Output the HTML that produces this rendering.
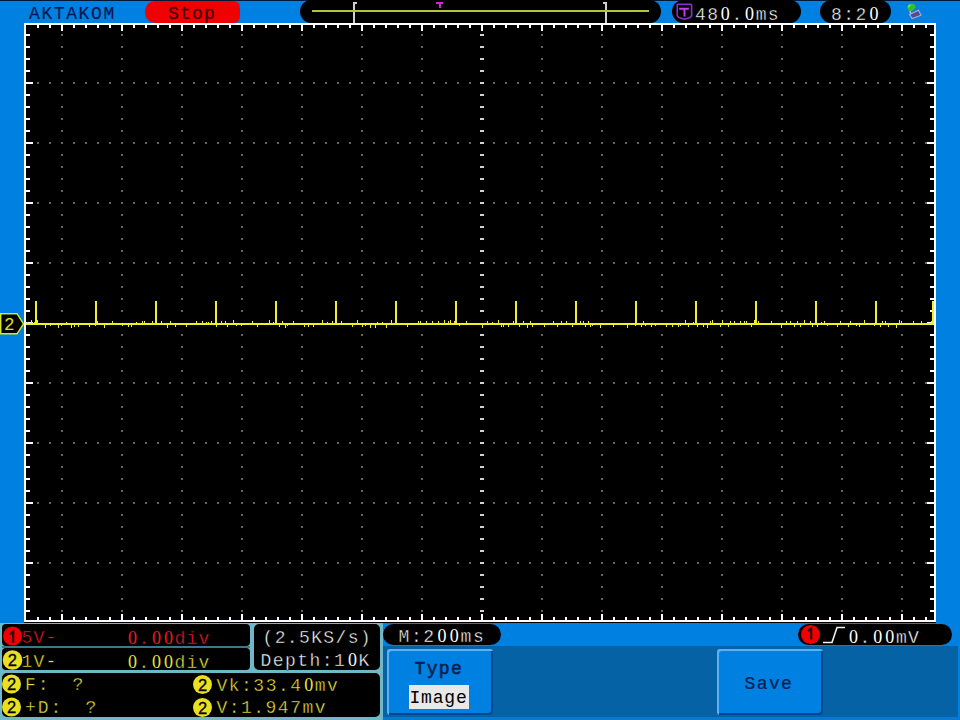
<!DOCTYPE html>
<html><head><meta charset="utf-8"><style>
html,body{margin:0;padding:0;}
body{width:960px;height:720px;overflow:hidden;position:relative;background:#0080e0;font-family:"Liberation Mono",monospace;}
.t{position:absolute;white-space:pre;}
.a{position:absolute;}
.z{display:inline-block;text-align:center;letter-spacing:0;-webkit-text-stroke:0 !important;font-family:"Liberation Serif",serif;}
svg{position:absolute;left:0;top:0;}
</style></head><body>
<div class="a" style="left:0;top:0;width:960px;height:1px;background:#001838"></div>
<svg width="960" height="720" viewBox="0 0 960 720" shape-rendering="crispEdges">
<rect x="24" y="23" width="912" height="600" fill="#000"/>
<rect x="61" y="34" width="2" height="2" fill="#666666"/>
<rect x="61" y="46" width="2" height="2" fill="#666666"/>
<rect x="61" y="58" width="2" height="2" fill="#666666"/>
<rect x="61" y="70" width="2" height="2" fill="#666666"/>
<rect x="61" y="82" width="2" height="2" fill="#666666"/>
<rect x="61" y="94" width="2" height="2" fill="#666666"/>
<rect x="61" y="106" width="2" height="2" fill="#666666"/>
<rect x="61" y="118" width="2" height="2" fill="#666666"/>
<rect x="61" y="130" width="2" height="2" fill="#666666"/>
<rect x="61" y="142" width="2" height="2" fill="#666666"/>
<rect x="61" y="154" width="2" height="2" fill="#666666"/>
<rect x="61" y="166" width="2" height="2" fill="#666666"/>
<rect x="61" y="178" width="2" height="2" fill="#666666"/>
<rect x="61" y="190" width="2" height="2" fill="#666666"/>
<rect x="61" y="202" width="2" height="2" fill="#666666"/>
<rect x="61" y="214" width="2" height="2" fill="#666666"/>
<rect x="61" y="226" width="2" height="2" fill="#666666"/>
<rect x="61" y="238" width="2" height="2" fill="#666666"/>
<rect x="61" y="250" width="2" height="2" fill="#666666"/>
<rect x="61" y="262" width="2" height="2" fill="#666666"/>
<rect x="61" y="274" width="2" height="2" fill="#666666"/>
<rect x="61" y="286" width="2" height="2" fill="#666666"/>
<rect x="61" y="298" width="2" height="2" fill="#666666"/>
<rect x="61" y="310" width="2" height="2" fill="#666666"/>
<rect x="61" y="334" width="2" height="2" fill="#666666"/>
<rect x="61" y="346" width="2" height="2" fill="#666666"/>
<rect x="61" y="358" width="2" height="2" fill="#666666"/>
<rect x="61" y="370" width="2" height="2" fill="#666666"/>
<rect x="61" y="382" width="2" height="2" fill="#666666"/>
<rect x="61" y="394" width="2" height="2" fill="#666666"/>
<rect x="61" y="406" width="2" height="2" fill="#666666"/>
<rect x="61" y="418" width="2" height="2" fill="#666666"/>
<rect x="61" y="430" width="2" height="2" fill="#666666"/>
<rect x="61" y="442" width="2" height="2" fill="#666666"/>
<rect x="61" y="454" width="2" height="2" fill="#666666"/>
<rect x="61" y="466" width="2" height="2" fill="#666666"/>
<rect x="61" y="478" width="2" height="2" fill="#666666"/>
<rect x="61" y="490" width="2" height="2" fill="#666666"/>
<rect x="61" y="502" width="2" height="2" fill="#666666"/>
<rect x="61" y="514" width="2" height="2" fill="#666666"/>
<rect x="61" y="526" width="2" height="2" fill="#666666"/>
<rect x="61" y="538" width="2" height="2" fill="#666666"/>
<rect x="61" y="550" width="2" height="2" fill="#666666"/>
<rect x="61" y="562" width="2" height="2" fill="#666666"/>
<rect x="61" y="574" width="2" height="2" fill="#666666"/>
<rect x="61" y="586" width="2" height="2" fill="#666666"/>
<rect x="61" y="598" width="2" height="2" fill="#666666"/>
<rect x="61" y="610" width="2" height="2" fill="#666666"/>
<rect x="121" y="34" width="2" height="2" fill="#666666"/>
<rect x="121" y="46" width="2" height="2" fill="#666666"/>
<rect x="121" y="58" width="2" height="2" fill="#666666"/>
<rect x="121" y="70" width="2" height="2" fill="#666666"/>
<rect x="121" y="82" width="2" height="2" fill="#666666"/>
<rect x="121" y="94" width="2" height="2" fill="#666666"/>
<rect x="121" y="106" width="2" height="2" fill="#666666"/>
<rect x="121" y="118" width="2" height="2" fill="#666666"/>
<rect x="121" y="130" width="2" height="2" fill="#666666"/>
<rect x="121" y="142" width="2" height="2" fill="#666666"/>
<rect x="121" y="154" width="2" height="2" fill="#666666"/>
<rect x="121" y="166" width="2" height="2" fill="#666666"/>
<rect x="121" y="178" width="2" height="2" fill="#666666"/>
<rect x="121" y="190" width="2" height="2" fill="#666666"/>
<rect x="121" y="202" width="2" height="2" fill="#666666"/>
<rect x="121" y="214" width="2" height="2" fill="#666666"/>
<rect x="121" y="226" width="2" height="2" fill="#666666"/>
<rect x="121" y="238" width="2" height="2" fill="#666666"/>
<rect x="121" y="250" width="2" height="2" fill="#666666"/>
<rect x="121" y="262" width="2" height="2" fill="#666666"/>
<rect x="121" y="274" width="2" height="2" fill="#666666"/>
<rect x="121" y="286" width="2" height="2" fill="#666666"/>
<rect x="121" y="298" width="2" height="2" fill="#666666"/>
<rect x="121" y="310" width="2" height="2" fill="#666666"/>
<rect x="121" y="334" width="2" height="2" fill="#666666"/>
<rect x="121" y="346" width="2" height="2" fill="#666666"/>
<rect x="121" y="358" width="2" height="2" fill="#666666"/>
<rect x="121" y="370" width="2" height="2" fill="#666666"/>
<rect x="121" y="382" width="2" height="2" fill="#666666"/>
<rect x="121" y="394" width="2" height="2" fill="#666666"/>
<rect x="121" y="406" width="2" height="2" fill="#666666"/>
<rect x="121" y="418" width="2" height="2" fill="#666666"/>
<rect x="121" y="430" width="2" height="2" fill="#666666"/>
<rect x="121" y="442" width="2" height="2" fill="#666666"/>
<rect x="121" y="454" width="2" height="2" fill="#666666"/>
<rect x="121" y="466" width="2" height="2" fill="#666666"/>
<rect x="121" y="478" width="2" height="2" fill="#666666"/>
<rect x="121" y="490" width="2" height="2" fill="#666666"/>
<rect x="121" y="502" width="2" height="2" fill="#666666"/>
<rect x="121" y="514" width="2" height="2" fill="#666666"/>
<rect x="121" y="526" width="2" height="2" fill="#666666"/>
<rect x="121" y="538" width="2" height="2" fill="#666666"/>
<rect x="121" y="550" width="2" height="2" fill="#666666"/>
<rect x="121" y="562" width="2" height="2" fill="#666666"/>
<rect x="121" y="574" width="2" height="2" fill="#666666"/>
<rect x="121" y="586" width="2" height="2" fill="#666666"/>
<rect x="121" y="598" width="2" height="2" fill="#666666"/>
<rect x="121" y="610" width="2" height="2" fill="#666666"/>
<rect x="181" y="34" width="2" height="2" fill="#666666"/>
<rect x="181" y="46" width="2" height="2" fill="#666666"/>
<rect x="181" y="58" width="2" height="2" fill="#666666"/>
<rect x="181" y="70" width="2" height="2" fill="#666666"/>
<rect x="181" y="82" width="2" height="2" fill="#666666"/>
<rect x="181" y="94" width="2" height="2" fill="#666666"/>
<rect x="181" y="106" width="2" height="2" fill="#666666"/>
<rect x="181" y="118" width="2" height="2" fill="#666666"/>
<rect x="181" y="130" width="2" height="2" fill="#666666"/>
<rect x="181" y="142" width="2" height="2" fill="#666666"/>
<rect x="181" y="154" width="2" height="2" fill="#666666"/>
<rect x="181" y="166" width="2" height="2" fill="#666666"/>
<rect x="181" y="178" width="2" height="2" fill="#666666"/>
<rect x="181" y="190" width="2" height="2" fill="#666666"/>
<rect x="181" y="202" width="2" height="2" fill="#666666"/>
<rect x="181" y="214" width="2" height="2" fill="#666666"/>
<rect x="181" y="226" width="2" height="2" fill="#666666"/>
<rect x="181" y="238" width="2" height="2" fill="#666666"/>
<rect x="181" y="250" width="2" height="2" fill="#666666"/>
<rect x="181" y="262" width="2" height="2" fill="#666666"/>
<rect x="181" y="274" width="2" height="2" fill="#666666"/>
<rect x="181" y="286" width="2" height="2" fill="#666666"/>
<rect x="181" y="298" width="2" height="2" fill="#666666"/>
<rect x="181" y="310" width="2" height="2" fill="#666666"/>
<rect x="181" y="334" width="2" height="2" fill="#666666"/>
<rect x="181" y="346" width="2" height="2" fill="#666666"/>
<rect x="181" y="358" width="2" height="2" fill="#666666"/>
<rect x="181" y="370" width="2" height="2" fill="#666666"/>
<rect x="181" y="382" width="2" height="2" fill="#666666"/>
<rect x="181" y="394" width="2" height="2" fill="#666666"/>
<rect x="181" y="406" width="2" height="2" fill="#666666"/>
<rect x="181" y="418" width="2" height="2" fill="#666666"/>
<rect x="181" y="430" width="2" height="2" fill="#666666"/>
<rect x="181" y="442" width="2" height="2" fill="#666666"/>
<rect x="181" y="454" width="2" height="2" fill="#666666"/>
<rect x="181" y="466" width="2" height="2" fill="#666666"/>
<rect x="181" y="478" width="2" height="2" fill="#666666"/>
<rect x="181" y="490" width="2" height="2" fill="#666666"/>
<rect x="181" y="502" width="2" height="2" fill="#666666"/>
<rect x="181" y="514" width="2" height="2" fill="#666666"/>
<rect x="181" y="526" width="2" height="2" fill="#666666"/>
<rect x="181" y="538" width="2" height="2" fill="#666666"/>
<rect x="181" y="550" width="2" height="2" fill="#666666"/>
<rect x="181" y="562" width="2" height="2" fill="#666666"/>
<rect x="181" y="574" width="2" height="2" fill="#666666"/>
<rect x="181" y="586" width="2" height="2" fill="#666666"/>
<rect x="181" y="598" width="2" height="2" fill="#666666"/>
<rect x="181" y="610" width="2" height="2" fill="#666666"/>
<rect x="241" y="34" width="2" height="2" fill="#666666"/>
<rect x="241" y="46" width="2" height="2" fill="#666666"/>
<rect x="241" y="58" width="2" height="2" fill="#666666"/>
<rect x="241" y="70" width="2" height="2" fill="#666666"/>
<rect x="241" y="82" width="2" height="2" fill="#666666"/>
<rect x="241" y="94" width="2" height="2" fill="#666666"/>
<rect x="241" y="106" width="2" height="2" fill="#666666"/>
<rect x="241" y="118" width="2" height="2" fill="#666666"/>
<rect x="241" y="130" width="2" height="2" fill="#666666"/>
<rect x="241" y="142" width="2" height="2" fill="#666666"/>
<rect x="241" y="154" width="2" height="2" fill="#666666"/>
<rect x="241" y="166" width="2" height="2" fill="#666666"/>
<rect x="241" y="178" width="2" height="2" fill="#666666"/>
<rect x="241" y="190" width="2" height="2" fill="#666666"/>
<rect x="241" y="202" width="2" height="2" fill="#666666"/>
<rect x="241" y="214" width="2" height="2" fill="#666666"/>
<rect x="241" y="226" width="2" height="2" fill="#666666"/>
<rect x="241" y="238" width="2" height="2" fill="#666666"/>
<rect x="241" y="250" width="2" height="2" fill="#666666"/>
<rect x="241" y="262" width="2" height="2" fill="#666666"/>
<rect x="241" y="274" width="2" height="2" fill="#666666"/>
<rect x="241" y="286" width="2" height="2" fill="#666666"/>
<rect x="241" y="298" width="2" height="2" fill="#666666"/>
<rect x="241" y="310" width="2" height="2" fill="#666666"/>
<rect x="241" y="334" width="2" height="2" fill="#666666"/>
<rect x="241" y="346" width="2" height="2" fill="#666666"/>
<rect x="241" y="358" width="2" height="2" fill="#666666"/>
<rect x="241" y="370" width="2" height="2" fill="#666666"/>
<rect x="241" y="382" width="2" height="2" fill="#666666"/>
<rect x="241" y="394" width="2" height="2" fill="#666666"/>
<rect x="241" y="406" width="2" height="2" fill="#666666"/>
<rect x="241" y="418" width="2" height="2" fill="#666666"/>
<rect x="241" y="430" width="2" height="2" fill="#666666"/>
<rect x="241" y="442" width="2" height="2" fill="#666666"/>
<rect x="241" y="454" width="2" height="2" fill="#666666"/>
<rect x="241" y="466" width="2" height="2" fill="#666666"/>
<rect x="241" y="478" width="2" height="2" fill="#666666"/>
<rect x="241" y="490" width="2" height="2" fill="#666666"/>
<rect x="241" y="502" width="2" height="2" fill="#666666"/>
<rect x="241" y="514" width="2" height="2" fill="#666666"/>
<rect x="241" y="526" width="2" height="2" fill="#666666"/>
<rect x="241" y="538" width="2" height="2" fill="#666666"/>
<rect x="241" y="550" width="2" height="2" fill="#666666"/>
<rect x="241" y="562" width="2" height="2" fill="#666666"/>
<rect x="241" y="574" width="2" height="2" fill="#666666"/>
<rect x="241" y="586" width="2" height="2" fill="#666666"/>
<rect x="241" y="598" width="2" height="2" fill="#666666"/>
<rect x="241" y="610" width="2" height="2" fill="#666666"/>
<rect x="301" y="34" width="2" height="2" fill="#666666"/>
<rect x="301" y="46" width="2" height="2" fill="#666666"/>
<rect x="301" y="58" width="2" height="2" fill="#666666"/>
<rect x="301" y="70" width="2" height="2" fill="#666666"/>
<rect x="301" y="82" width="2" height="2" fill="#666666"/>
<rect x="301" y="94" width="2" height="2" fill="#666666"/>
<rect x="301" y="106" width="2" height="2" fill="#666666"/>
<rect x="301" y="118" width="2" height="2" fill="#666666"/>
<rect x="301" y="130" width="2" height="2" fill="#666666"/>
<rect x="301" y="142" width="2" height="2" fill="#666666"/>
<rect x="301" y="154" width="2" height="2" fill="#666666"/>
<rect x="301" y="166" width="2" height="2" fill="#666666"/>
<rect x="301" y="178" width="2" height="2" fill="#666666"/>
<rect x="301" y="190" width="2" height="2" fill="#666666"/>
<rect x="301" y="202" width="2" height="2" fill="#666666"/>
<rect x="301" y="214" width="2" height="2" fill="#666666"/>
<rect x="301" y="226" width="2" height="2" fill="#666666"/>
<rect x="301" y="238" width="2" height="2" fill="#666666"/>
<rect x="301" y="250" width="2" height="2" fill="#666666"/>
<rect x="301" y="262" width="2" height="2" fill="#666666"/>
<rect x="301" y="274" width="2" height="2" fill="#666666"/>
<rect x="301" y="286" width="2" height="2" fill="#666666"/>
<rect x="301" y="298" width="2" height="2" fill="#666666"/>
<rect x="301" y="310" width="2" height="2" fill="#666666"/>
<rect x="301" y="334" width="2" height="2" fill="#666666"/>
<rect x="301" y="346" width="2" height="2" fill="#666666"/>
<rect x="301" y="358" width="2" height="2" fill="#666666"/>
<rect x="301" y="370" width="2" height="2" fill="#666666"/>
<rect x="301" y="382" width="2" height="2" fill="#666666"/>
<rect x="301" y="394" width="2" height="2" fill="#666666"/>
<rect x="301" y="406" width="2" height="2" fill="#666666"/>
<rect x="301" y="418" width="2" height="2" fill="#666666"/>
<rect x="301" y="430" width="2" height="2" fill="#666666"/>
<rect x="301" y="442" width="2" height="2" fill="#666666"/>
<rect x="301" y="454" width="2" height="2" fill="#666666"/>
<rect x="301" y="466" width="2" height="2" fill="#666666"/>
<rect x="301" y="478" width="2" height="2" fill="#666666"/>
<rect x="301" y="490" width="2" height="2" fill="#666666"/>
<rect x="301" y="502" width="2" height="2" fill="#666666"/>
<rect x="301" y="514" width="2" height="2" fill="#666666"/>
<rect x="301" y="526" width="2" height="2" fill="#666666"/>
<rect x="301" y="538" width="2" height="2" fill="#666666"/>
<rect x="301" y="550" width="2" height="2" fill="#666666"/>
<rect x="301" y="562" width="2" height="2" fill="#666666"/>
<rect x="301" y="574" width="2" height="2" fill="#666666"/>
<rect x="301" y="586" width="2" height="2" fill="#666666"/>
<rect x="301" y="598" width="2" height="2" fill="#666666"/>
<rect x="301" y="610" width="2" height="2" fill="#666666"/>
<rect x="361" y="34" width="2" height="2" fill="#666666"/>
<rect x="361" y="46" width="2" height="2" fill="#666666"/>
<rect x="361" y="58" width="2" height="2" fill="#666666"/>
<rect x="361" y="70" width="2" height="2" fill="#666666"/>
<rect x="361" y="82" width="2" height="2" fill="#666666"/>
<rect x="361" y="94" width="2" height="2" fill="#666666"/>
<rect x="361" y="106" width="2" height="2" fill="#666666"/>
<rect x="361" y="118" width="2" height="2" fill="#666666"/>
<rect x="361" y="130" width="2" height="2" fill="#666666"/>
<rect x="361" y="142" width="2" height="2" fill="#666666"/>
<rect x="361" y="154" width="2" height="2" fill="#666666"/>
<rect x="361" y="166" width="2" height="2" fill="#666666"/>
<rect x="361" y="178" width="2" height="2" fill="#666666"/>
<rect x="361" y="190" width="2" height="2" fill="#666666"/>
<rect x="361" y="202" width="2" height="2" fill="#666666"/>
<rect x="361" y="214" width="2" height="2" fill="#666666"/>
<rect x="361" y="226" width="2" height="2" fill="#666666"/>
<rect x="361" y="238" width="2" height="2" fill="#666666"/>
<rect x="361" y="250" width="2" height="2" fill="#666666"/>
<rect x="361" y="262" width="2" height="2" fill="#666666"/>
<rect x="361" y="274" width="2" height="2" fill="#666666"/>
<rect x="361" y="286" width="2" height="2" fill="#666666"/>
<rect x="361" y="298" width="2" height="2" fill="#666666"/>
<rect x="361" y="310" width="2" height="2" fill="#666666"/>
<rect x="361" y="334" width="2" height="2" fill="#666666"/>
<rect x="361" y="346" width="2" height="2" fill="#666666"/>
<rect x="361" y="358" width="2" height="2" fill="#666666"/>
<rect x="361" y="370" width="2" height="2" fill="#666666"/>
<rect x="361" y="382" width="2" height="2" fill="#666666"/>
<rect x="361" y="394" width="2" height="2" fill="#666666"/>
<rect x="361" y="406" width="2" height="2" fill="#666666"/>
<rect x="361" y="418" width="2" height="2" fill="#666666"/>
<rect x="361" y="430" width="2" height="2" fill="#666666"/>
<rect x="361" y="442" width="2" height="2" fill="#666666"/>
<rect x="361" y="454" width="2" height="2" fill="#666666"/>
<rect x="361" y="466" width="2" height="2" fill="#666666"/>
<rect x="361" y="478" width="2" height="2" fill="#666666"/>
<rect x="361" y="490" width="2" height="2" fill="#666666"/>
<rect x="361" y="502" width="2" height="2" fill="#666666"/>
<rect x="361" y="514" width="2" height="2" fill="#666666"/>
<rect x="361" y="526" width="2" height="2" fill="#666666"/>
<rect x="361" y="538" width="2" height="2" fill="#666666"/>
<rect x="361" y="550" width="2" height="2" fill="#666666"/>
<rect x="361" y="562" width="2" height="2" fill="#666666"/>
<rect x="361" y="574" width="2" height="2" fill="#666666"/>
<rect x="361" y="586" width="2" height="2" fill="#666666"/>
<rect x="361" y="598" width="2" height="2" fill="#666666"/>
<rect x="361" y="610" width="2" height="2" fill="#666666"/>
<rect x="421" y="34" width="2" height="2" fill="#666666"/>
<rect x="421" y="46" width="2" height="2" fill="#666666"/>
<rect x="421" y="58" width="2" height="2" fill="#666666"/>
<rect x="421" y="70" width="2" height="2" fill="#666666"/>
<rect x="421" y="82" width="2" height="2" fill="#666666"/>
<rect x="421" y="94" width="2" height="2" fill="#666666"/>
<rect x="421" y="106" width="2" height="2" fill="#666666"/>
<rect x="421" y="118" width="2" height="2" fill="#666666"/>
<rect x="421" y="130" width="2" height="2" fill="#666666"/>
<rect x="421" y="142" width="2" height="2" fill="#666666"/>
<rect x="421" y="154" width="2" height="2" fill="#666666"/>
<rect x="421" y="166" width="2" height="2" fill="#666666"/>
<rect x="421" y="178" width="2" height="2" fill="#666666"/>
<rect x="421" y="190" width="2" height="2" fill="#666666"/>
<rect x="421" y="202" width="2" height="2" fill="#666666"/>
<rect x="421" y="214" width="2" height="2" fill="#666666"/>
<rect x="421" y="226" width="2" height="2" fill="#666666"/>
<rect x="421" y="238" width="2" height="2" fill="#666666"/>
<rect x="421" y="250" width="2" height="2" fill="#666666"/>
<rect x="421" y="262" width="2" height="2" fill="#666666"/>
<rect x="421" y="274" width="2" height="2" fill="#666666"/>
<rect x="421" y="286" width="2" height="2" fill="#666666"/>
<rect x="421" y="298" width="2" height="2" fill="#666666"/>
<rect x="421" y="310" width="2" height="2" fill="#666666"/>
<rect x="421" y="334" width="2" height="2" fill="#666666"/>
<rect x="421" y="346" width="2" height="2" fill="#666666"/>
<rect x="421" y="358" width="2" height="2" fill="#666666"/>
<rect x="421" y="370" width="2" height="2" fill="#666666"/>
<rect x="421" y="382" width="2" height="2" fill="#666666"/>
<rect x="421" y="394" width="2" height="2" fill="#666666"/>
<rect x="421" y="406" width="2" height="2" fill="#666666"/>
<rect x="421" y="418" width="2" height="2" fill="#666666"/>
<rect x="421" y="430" width="2" height="2" fill="#666666"/>
<rect x="421" y="442" width="2" height="2" fill="#666666"/>
<rect x="421" y="454" width="2" height="2" fill="#666666"/>
<rect x="421" y="466" width="2" height="2" fill="#666666"/>
<rect x="421" y="478" width="2" height="2" fill="#666666"/>
<rect x="421" y="490" width="2" height="2" fill="#666666"/>
<rect x="421" y="502" width="2" height="2" fill="#666666"/>
<rect x="421" y="514" width="2" height="2" fill="#666666"/>
<rect x="421" y="526" width="2" height="2" fill="#666666"/>
<rect x="421" y="538" width="2" height="2" fill="#666666"/>
<rect x="421" y="550" width="2" height="2" fill="#666666"/>
<rect x="421" y="562" width="2" height="2" fill="#666666"/>
<rect x="421" y="574" width="2" height="2" fill="#666666"/>
<rect x="421" y="586" width="2" height="2" fill="#666666"/>
<rect x="421" y="598" width="2" height="2" fill="#666666"/>
<rect x="421" y="610" width="2" height="2" fill="#666666"/>
<rect x="541" y="34" width="2" height="2" fill="#666666"/>
<rect x="541" y="46" width="2" height="2" fill="#666666"/>
<rect x="541" y="58" width="2" height="2" fill="#666666"/>
<rect x="541" y="70" width="2" height="2" fill="#666666"/>
<rect x="541" y="82" width="2" height="2" fill="#666666"/>
<rect x="541" y="94" width="2" height="2" fill="#666666"/>
<rect x="541" y="106" width="2" height="2" fill="#666666"/>
<rect x="541" y="118" width="2" height="2" fill="#666666"/>
<rect x="541" y="130" width="2" height="2" fill="#666666"/>
<rect x="541" y="142" width="2" height="2" fill="#666666"/>
<rect x="541" y="154" width="2" height="2" fill="#666666"/>
<rect x="541" y="166" width="2" height="2" fill="#666666"/>
<rect x="541" y="178" width="2" height="2" fill="#666666"/>
<rect x="541" y="190" width="2" height="2" fill="#666666"/>
<rect x="541" y="202" width="2" height="2" fill="#666666"/>
<rect x="541" y="214" width="2" height="2" fill="#666666"/>
<rect x="541" y="226" width="2" height="2" fill="#666666"/>
<rect x="541" y="238" width="2" height="2" fill="#666666"/>
<rect x="541" y="250" width="2" height="2" fill="#666666"/>
<rect x="541" y="262" width="2" height="2" fill="#666666"/>
<rect x="541" y="274" width="2" height="2" fill="#666666"/>
<rect x="541" y="286" width="2" height="2" fill="#666666"/>
<rect x="541" y="298" width="2" height="2" fill="#666666"/>
<rect x="541" y="310" width="2" height="2" fill="#666666"/>
<rect x="541" y="334" width="2" height="2" fill="#666666"/>
<rect x="541" y="346" width="2" height="2" fill="#666666"/>
<rect x="541" y="358" width="2" height="2" fill="#666666"/>
<rect x="541" y="370" width="2" height="2" fill="#666666"/>
<rect x="541" y="382" width="2" height="2" fill="#666666"/>
<rect x="541" y="394" width="2" height="2" fill="#666666"/>
<rect x="541" y="406" width="2" height="2" fill="#666666"/>
<rect x="541" y="418" width="2" height="2" fill="#666666"/>
<rect x="541" y="430" width="2" height="2" fill="#666666"/>
<rect x="541" y="442" width="2" height="2" fill="#666666"/>
<rect x="541" y="454" width="2" height="2" fill="#666666"/>
<rect x="541" y="466" width="2" height="2" fill="#666666"/>
<rect x="541" y="478" width="2" height="2" fill="#666666"/>
<rect x="541" y="490" width="2" height="2" fill="#666666"/>
<rect x="541" y="502" width="2" height="2" fill="#666666"/>
<rect x="541" y="514" width="2" height="2" fill="#666666"/>
<rect x="541" y="526" width="2" height="2" fill="#666666"/>
<rect x="541" y="538" width="2" height="2" fill="#666666"/>
<rect x="541" y="550" width="2" height="2" fill="#666666"/>
<rect x="541" y="562" width="2" height="2" fill="#666666"/>
<rect x="541" y="574" width="2" height="2" fill="#666666"/>
<rect x="541" y="586" width="2" height="2" fill="#666666"/>
<rect x="541" y="598" width="2" height="2" fill="#666666"/>
<rect x="541" y="610" width="2" height="2" fill="#666666"/>
<rect x="601" y="34" width="2" height="2" fill="#666666"/>
<rect x="601" y="46" width="2" height="2" fill="#666666"/>
<rect x="601" y="58" width="2" height="2" fill="#666666"/>
<rect x="601" y="70" width="2" height="2" fill="#666666"/>
<rect x="601" y="82" width="2" height="2" fill="#666666"/>
<rect x="601" y="94" width="2" height="2" fill="#666666"/>
<rect x="601" y="106" width="2" height="2" fill="#666666"/>
<rect x="601" y="118" width="2" height="2" fill="#666666"/>
<rect x="601" y="130" width="2" height="2" fill="#666666"/>
<rect x="601" y="142" width="2" height="2" fill="#666666"/>
<rect x="601" y="154" width="2" height="2" fill="#666666"/>
<rect x="601" y="166" width="2" height="2" fill="#666666"/>
<rect x="601" y="178" width="2" height="2" fill="#666666"/>
<rect x="601" y="190" width="2" height="2" fill="#666666"/>
<rect x="601" y="202" width="2" height="2" fill="#666666"/>
<rect x="601" y="214" width="2" height="2" fill="#666666"/>
<rect x="601" y="226" width="2" height="2" fill="#666666"/>
<rect x="601" y="238" width="2" height="2" fill="#666666"/>
<rect x="601" y="250" width="2" height="2" fill="#666666"/>
<rect x="601" y="262" width="2" height="2" fill="#666666"/>
<rect x="601" y="274" width="2" height="2" fill="#666666"/>
<rect x="601" y="286" width="2" height="2" fill="#666666"/>
<rect x="601" y="298" width="2" height="2" fill="#666666"/>
<rect x="601" y="310" width="2" height="2" fill="#666666"/>
<rect x="601" y="334" width="2" height="2" fill="#666666"/>
<rect x="601" y="346" width="2" height="2" fill="#666666"/>
<rect x="601" y="358" width="2" height="2" fill="#666666"/>
<rect x="601" y="370" width="2" height="2" fill="#666666"/>
<rect x="601" y="382" width="2" height="2" fill="#666666"/>
<rect x="601" y="394" width="2" height="2" fill="#666666"/>
<rect x="601" y="406" width="2" height="2" fill="#666666"/>
<rect x="601" y="418" width="2" height="2" fill="#666666"/>
<rect x="601" y="430" width="2" height="2" fill="#666666"/>
<rect x="601" y="442" width="2" height="2" fill="#666666"/>
<rect x="601" y="454" width="2" height="2" fill="#666666"/>
<rect x="601" y="466" width="2" height="2" fill="#666666"/>
<rect x="601" y="478" width="2" height="2" fill="#666666"/>
<rect x="601" y="490" width="2" height="2" fill="#666666"/>
<rect x="601" y="502" width="2" height="2" fill="#666666"/>
<rect x="601" y="514" width="2" height="2" fill="#666666"/>
<rect x="601" y="526" width="2" height="2" fill="#666666"/>
<rect x="601" y="538" width="2" height="2" fill="#666666"/>
<rect x="601" y="550" width="2" height="2" fill="#666666"/>
<rect x="601" y="562" width="2" height="2" fill="#666666"/>
<rect x="601" y="574" width="2" height="2" fill="#666666"/>
<rect x="601" y="586" width="2" height="2" fill="#666666"/>
<rect x="601" y="598" width="2" height="2" fill="#666666"/>
<rect x="601" y="610" width="2" height="2" fill="#666666"/>
<rect x="661" y="34" width="2" height="2" fill="#666666"/>
<rect x="661" y="46" width="2" height="2" fill="#666666"/>
<rect x="661" y="58" width="2" height="2" fill="#666666"/>
<rect x="661" y="70" width="2" height="2" fill="#666666"/>
<rect x="661" y="82" width="2" height="2" fill="#666666"/>
<rect x="661" y="94" width="2" height="2" fill="#666666"/>
<rect x="661" y="106" width="2" height="2" fill="#666666"/>
<rect x="661" y="118" width="2" height="2" fill="#666666"/>
<rect x="661" y="130" width="2" height="2" fill="#666666"/>
<rect x="661" y="142" width="2" height="2" fill="#666666"/>
<rect x="661" y="154" width="2" height="2" fill="#666666"/>
<rect x="661" y="166" width="2" height="2" fill="#666666"/>
<rect x="661" y="178" width="2" height="2" fill="#666666"/>
<rect x="661" y="190" width="2" height="2" fill="#666666"/>
<rect x="661" y="202" width="2" height="2" fill="#666666"/>
<rect x="661" y="214" width="2" height="2" fill="#666666"/>
<rect x="661" y="226" width="2" height="2" fill="#666666"/>
<rect x="661" y="238" width="2" height="2" fill="#666666"/>
<rect x="661" y="250" width="2" height="2" fill="#666666"/>
<rect x="661" y="262" width="2" height="2" fill="#666666"/>
<rect x="661" y="274" width="2" height="2" fill="#666666"/>
<rect x="661" y="286" width="2" height="2" fill="#666666"/>
<rect x="661" y="298" width="2" height="2" fill="#666666"/>
<rect x="661" y="310" width="2" height="2" fill="#666666"/>
<rect x="661" y="334" width="2" height="2" fill="#666666"/>
<rect x="661" y="346" width="2" height="2" fill="#666666"/>
<rect x="661" y="358" width="2" height="2" fill="#666666"/>
<rect x="661" y="370" width="2" height="2" fill="#666666"/>
<rect x="661" y="382" width="2" height="2" fill="#666666"/>
<rect x="661" y="394" width="2" height="2" fill="#666666"/>
<rect x="661" y="406" width="2" height="2" fill="#666666"/>
<rect x="661" y="418" width="2" height="2" fill="#666666"/>
<rect x="661" y="430" width="2" height="2" fill="#666666"/>
<rect x="661" y="442" width="2" height="2" fill="#666666"/>
<rect x="661" y="454" width="2" height="2" fill="#666666"/>
<rect x="661" y="466" width="2" height="2" fill="#666666"/>
<rect x="661" y="478" width="2" height="2" fill="#666666"/>
<rect x="661" y="490" width="2" height="2" fill="#666666"/>
<rect x="661" y="502" width="2" height="2" fill="#666666"/>
<rect x="661" y="514" width="2" height="2" fill="#666666"/>
<rect x="661" y="526" width="2" height="2" fill="#666666"/>
<rect x="661" y="538" width="2" height="2" fill="#666666"/>
<rect x="661" y="550" width="2" height="2" fill="#666666"/>
<rect x="661" y="562" width="2" height="2" fill="#666666"/>
<rect x="661" y="574" width="2" height="2" fill="#666666"/>
<rect x="661" y="586" width="2" height="2" fill="#666666"/>
<rect x="661" y="598" width="2" height="2" fill="#666666"/>
<rect x="661" y="610" width="2" height="2" fill="#666666"/>
<rect x="721" y="34" width="2" height="2" fill="#666666"/>
<rect x="721" y="46" width="2" height="2" fill="#666666"/>
<rect x="721" y="58" width="2" height="2" fill="#666666"/>
<rect x="721" y="70" width="2" height="2" fill="#666666"/>
<rect x="721" y="82" width="2" height="2" fill="#666666"/>
<rect x="721" y="94" width="2" height="2" fill="#666666"/>
<rect x="721" y="106" width="2" height="2" fill="#666666"/>
<rect x="721" y="118" width="2" height="2" fill="#666666"/>
<rect x="721" y="130" width="2" height="2" fill="#666666"/>
<rect x="721" y="142" width="2" height="2" fill="#666666"/>
<rect x="721" y="154" width="2" height="2" fill="#666666"/>
<rect x="721" y="166" width="2" height="2" fill="#666666"/>
<rect x="721" y="178" width="2" height="2" fill="#666666"/>
<rect x="721" y="190" width="2" height="2" fill="#666666"/>
<rect x="721" y="202" width="2" height="2" fill="#666666"/>
<rect x="721" y="214" width="2" height="2" fill="#666666"/>
<rect x="721" y="226" width="2" height="2" fill="#666666"/>
<rect x="721" y="238" width="2" height="2" fill="#666666"/>
<rect x="721" y="250" width="2" height="2" fill="#666666"/>
<rect x="721" y="262" width="2" height="2" fill="#666666"/>
<rect x="721" y="274" width="2" height="2" fill="#666666"/>
<rect x="721" y="286" width="2" height="2" fill="#666666"/>
<rect x="721" y="298" width="2" height="2" fill="#666666"/>
<rect x="721" y="310" width="2" height="2" fill="#666666"/>
<rect x="721" y="334" width="2" height="2" fill="#666666"/>
<rect x="721" y="346" width="2" height="2" fill="#666666"/>
<rect x="721" y="358" width="2" height="2" fill="#666666"/>
<rect x="721" y="370" width="2" height="2" fill="#666666"/>
<rect x="721" y="382" width="2" height="2" fill="#666666"/>
<rect x="721" y="394" width="2" height="2" fill="#666666"/>
<rect x="721" y="406" width="2" height="2" fill="#666666"/>
<rect x="721" y="418" width="2" height="2" fill="#666666"/>
<rect x="721" y="430" width="2" height="2" fill="#666666"/>
<rect x="721" y="442" width="2" height="2" fill="#666666"/>
<rect x="721" y="454" width="2" height="2" fill="#666666"/>
<rect x="721" y="466" width="2" height="2" fill="#666666"/>
<rect x="721" y="478" width="2" height="2" fill="#666666"/>
<rect x="721" y="490" width="2" height="2" fill="#666666"/>
<rect x="721" y="502" width="2" height="2" fill="#666666"/>
<rect x="721" y="514" width="2" height="2" fill="#666666"/>
<rect x="721" y="526" width="2" height="2" fill="#666666"/>
<rect x="721" y="538" width="2" height="2" fill="#666666"/>
<rect x="721" y="550" width="2" height="2" fill="#666666"/>
<rect x="721" y="562" width="2" height="2" fill="#666666"/>
<rect x="721" y="574" width="2" height="2" fill="#666666"/>
<rect x="721" y="586" width="2" height="2" fill="#666666"/>
<rect x="721" y="598" width="2" height="2" fill="#666666"/>
<rect x="721" y="610" width="2" height="2" fill="#666666"/>
<rect x="781" y="34" width="2" height="2" fill="#666666"/>
<rect x="781" y="46" width="2" height="2" fill="#666666"/>
<rect x="781" y="58" width="2" height="2" fill="#666666"/>
<rect x="781" y="70" width="2" height="2" fill="#666666"/>
<rect x="781" y="82" width="2" height="2" fill="#666666"/>
<rect x="781" y="94" width="2" height="2" fill="#666666"/>
<rect x="781" y="106" width="2" height="2" fill="#666666"/>
<rect x="781" y="118" width="2" height="2" fill="#666666"/>
<rect x="781" y="130" width="2" height="2" fill="#666666"/>
<rect x="781" y="142" width="2" height="2" fill="#666666"/>
<rect x="781" y="154" width="2" height="2" fill="#666666"/>
<rect x="781" y="166" width="2" height="2" fill="#666666"/>
<rect x="781" y="178" width="2" height="2" fill="#666666"/>
<rect x="781" y="190" width="2" height="2" fill="#666666"/>
<rect x="781" y="202" width="2" height="2" fill="#666666"/>
<rect x="781" y="214" width="2" height="2" fill="#666666"/>
<rect x="781" y="226" width="2" height="2" fill="#666666"/>
<rect x="781" y="238" width="2" height="2" fill="#666666"/>
<rect x="781" y="250" width="2" height="2" fill="#666666"/>
<rect x="781" y="262" width="2" height="2" fill="#666666"/>
<rect x="781" y="274" width="2" height="2" fill="#666666"/>
<rect x="781" y="286" width="2" height="2" fill="#666666"/>
<rect x="781" y="298" width="2" height="2" fill="#666666"/>
<rect x="781" y="310" width="2" height="2" fill="#666666"/>
<rect x="781" y="334" width="2" height="2" fill="#666666"/>
<rect x="781" y="346" width="2" height="2" fill="#666666"/>
<rect x="781" y="358" width="2" height="2" fill="#666666"/>
<rect x="781" y="370" width="2" height="2" fill="#666666"/>
<rect x="781" y="382" width="2" height="2" fill="#666666"/>
<rect x="781" y="394" width="2" height="2" fill="#666666"/>
<rect x="781" y="406" width="2" height="2" fill="#666666"/>
<rect x="781" y="418" width="2" height="2" fill="#666666"/>
<rect x="781" y="430" width="2" height="2" fill="#666666"/>
<rect x="781" y="442" width="2" height="2" fill="#666666"/>
<rect x="781" y="454" width="2" height="2" fill="#666666"/>
<rect x="781" y="466" width="2" height="2" fill="#666666"/>
<rect x="781" y="478" width="2" height="2" fill="#666666"/>
<rect x="781" y="490" width="2" height="2" fill="#666666"/>
<rect x="781" y="502" width="2" height="2" fill="#666666"/>
<rect x="781" y="514" width="2" height="2" fill="#666666"/>
<rect x="781" y="526" width="2" height="2" fill="#666666"/>
<rect x="781" y="538" width="2" height="2" fill="#666666"/>
<rect x="781" y="550" width="2" height="2" fill="#666666"/>
<rect x="781" y="562" width="2" height="2" fill="#666666"/>
<rect x="781" y="574" width="2" height="2" fill="#666666"/>
<rect x="781" y="586" width="2" height="2" fill="#666666"/>
<rect x="781" y="598" width="2" height="2" fill="#666666"/>
<rect x="781" y="610" width="2" height="2" fill="#666666"/>
<rect x="841" y="34" width="2" height="2" fill="#666666"/>
<rect x="841" y="46" width="2" height="2" fill="#666666"/>
<rect x="841" y="58" width="2" height="2" fill="#666666"/>
<rect x="841" y="70" width="2" height="2" fill="#666666"/>
<rect x="841" y="82" width="2" height="2" fill="#666666"/>
<rect x="841" y="94" width="2" height="2" fill="#666666"/>
<rect x="841" y="106" width="2" height="2" fill="#666666"/>
<rect x="841" y="118" width="2" height="2" fill="#666666"/>
<rect x="841" y="130" width="2" height="2" fill="#666666"/>
<rect x="841" y="142" width="2" height="2" fill="#666666"/>
<rect x="841" y="154" width="2" height="2" fill="#666666"/>
<rect x="841" y="166" width="2" height="2" fill="#666666"/>
<rect x="841" y="178" width="2" height="2" fill="#666666"/>
<rect x="841" y="190" width="2" height="2" fill="#666666"/>
<rect x="841" y="202" width="2" height="2" fill="#666666"/>
<rect x="841" y="214" width="2" height="2" fill="#666666"/>
<rect x="841" y="226" width="2" height="2" fill="#666666"/>
<rect x="841" y="238" width="2" height="2" fill="#666666"/>
<rect x="841" y="250" width="2" height="2" fill="#666666"/>
<rect x="841" y="262" width="2" height="2" fill="#666666"/>
<rect x="841" y="274" width="2" height="2" fill="#666666"/>
<rect x="841" y="286" width="2" height="2" fill="#666666"/>
<rect x="841" y="298" width="2" height="2" fill="#666666"/>
<rect x="841" y="310" width="2" height="2" fill="#666666"/>
<rect x="841" y="334" width="2" height="2" fill="#666666"/>
<rect x="841" y="346" width="2" height="2" fill="#666666"/>
<rect x="841" y="358" width="2" height="2" fill="#666666"/>
<rect x="841" y="370" width="2" height="2" fill="#666666"/>
<rect x="841" y="382" width="2" height="2" fill="#666666"/>
<rect x="841" y="394" width="2" height="2" fill="#666666"/>
<rect x="841" y="406" width="2" height="2" fill="#666666"/>
<rect x="841" y="418" width="2" height="2" fill="#666666"/>
<rect x="841" y="430" width="2" height="2" fill="#666666"/>
<rect x="841" y="442" width="2" height="2" fill="#666666"/>
<rect x="841" y="454" width="2" height="2" fill="#666666"/>
<rect x="841" y="466" width="2" height="2" fill="#666666"/>
<rect x="841" y="478" width="2" height="2" fill="#666666"/>
<rect x="841" y="490" width="2" height="2" fill="#666666"/>
<rect x="841" y="502" width="2" height="2" fill="#666666"/>
<rect x="841" y="514" width="2" height="2" fill="#666666"/>
<rect x="841" y="526" width="2" height="2" fill="#666666"/>
<rect x="841" y="538" width="2" height="2" fill="#666666"/>
<rect x="841" y="550" width="2" height="2" fill="#666666"/>
<rect x="841" y="562" width="2" height="2" fill="#666666"/>
<rect x="841" y="574" width="2" height="2" fill="#666666"/>
<rect x="841" y="586" width="2" height="2" fill="#666666"/>
<rect x="841" y="598" width="2" height="2" fill="#666666"/>
<rect x="841" y="610" width="2" height="2" fill="#666666"/>
<rect x="901" y="34" width="2" height="2" fill="#666666"/>
<rect x="901" y="46" width="2" height="2" fill="#666666"/>
<rect x="901" y="58" width="2" height="2" fill="#666666"/>
<rect x="901" y="70" width="2" height="2" fill="#666666"/>
<rect x="901" y="82" width="2" height="2" fill="#666666"/>
<rect x="901" y="94" width="2" height="2" fill="#666666"/>
<rect x="901" y="106" width="2" height="2" fill="#666666"/>
<rect x="901" y="118" width="2" height="2" fill="#666666"/>
<rect x="901" y="130" width="2" height="2" fill="#666666"/>
<rect x="901" y="142" width="2" height="2" fill="#666666"/>
<rect x="901" y="154" width="2" height="2" fill="#666666"/>
<rect x="901" y="166" width="2" height="2" fill="#666666"/>
<rect x="901" y="178" width="2" height="2" fill="#666666"/>
<rect x="901" y="190" width="2" height="2" fill="#666666"/>
<rect x="901" y="202" width="2" height="2" fill="#666666"/>
<rect x="901" y="214" width="2" height="2" fill="#666666"/>
<rect x="901" y="226" width="2" height="2" fill="#666666"/>
<rect x="901" y="238" width="2" height="2" fill="#666666"/>
<rect x="901" y="250" width="2" height="2" fill="#666666"/>
<rect x="901" y="262" width="2" height="2" fill="#666666"/>
<rect x="901" y="274" width="2" height="2" fill="#666666"/>
<rect x="901" y="286" width="2" height="2" fill="#666666"/>
<rect x="901" y="298" width="2" height="2" fill="#666666"/>
<rect x="901" y="310" width="2" height="2" fill="#666666"/>
<rect x="901" y="334" width="2" height="2" fill="#666666"/>
<rect x="901" y="346" width="2" height="2" fill="#666666"/>
<rect x="901" y="358" width="2" height="2" fill="#666666"/>
<rect x="901" y="370" width="2" height="2" fill="#666666"/>
<rect x="901" y="382" width="2" height="2" fill="#666666"/>
<rect x="901" y="394" width="2" height="2" fill="#666666"/>
<rect x="901" y="406" width="2" height="2" fill="#666666"/>
<rect x="901" y="418" width="2" height="2" fill="#666666"/>
<rect x="901" y="430" width="2" height="2" fill="#666666"/>
<rect x="901" y="442" width="2" height="2" fill="#666666"/>
<rect x="901" y="454" width="2" height="2" fill="#666666"/>
<rect x="901" y="466" width="2" height="2" fill="#666666"/>
<rect x="901" y="478" width="2" height="2" fill="#666666"/>
<rect x="901" y="490" width="2" height="2" fill="#666666"/>
<rect x="901" y="502" width="2" height="2" fill="#666666"/>
<rect x="901" y="514" width="2" height="2" fill="#666666"/>
<rect x="901" y="526" width="2" height="2" fill="#666666"/>
<rect x="901" y="538" width="2" height="2" fill="#666666"/>
<rect x="901" y="550" width="2" height="2" fill="#666666"/>
<rect x="901" y="562" width="2" height="2" fill="#666666"/>
<rect x="901" y="574" width="2" height="2" fill="#666666"/>
<rect x="901" y="586" width="2" height="2" fill="#666666"/>
<rect x="901" y="598" width="2" height="2" fill="#666666"/>
<rect x="901" y="610" width="2" height="2" fill="#666666"/>
<rect x="37" y="82" width="2" height="2" fill="#666666"/>
<rect x="49" y="82" width="2" height="2" fill="#666666"/>
<rect x="73" y="82" width="2" height="2" fill="#666666"/>
<rect x="85" y="82" width="2" height="2" fill="#666666"/>
<rect x="97" y="82" width="2" height="2" fill="#666666"/>
<rect x="109" y="82" width="2" height="2" fill="#666666"/>
<rect x="133" y="82" width="2" height="2" fill="#666666"/>
<rect x="145" y="82" width="2" height="2" fill="#666666"/>
<rect x="157" y="82" width="2" height="2" fill="#666666"/>
<rect x="169" y="82" width="2" height="2" fill="#666666"/>
<rect x="193" y="82" width="2" height="2" fill="#666666"/>
<rect x="205" y="82" width="2" height="2" fill="#666666"/>
<rect x="217" y="82" width="2" height="2" fill="#666666"/>
<rect x="229" y="82" width="2" height="2" fill="#666666"/>
<rect x="253" y="82" width="2" height="2" fill="#666666"/>
<rect x="265" y="82" width="2" height="2" fill="#666666"/>
<rect x="277" y="82" width="2" height="2" fill="#666666"/>
<rect x="289" y="82" width="2" height="2" fill="#666666"/>
<rect x="313" y="82" width="2" height="2" fill="#666666"/>
<rect x="325" y="82" width="2" height="2" fill="#666666"/>
<rect x="337" y="82" width="2" height="2" fill="#666666"/>
<rect x="349" y="82" width="2" height="2" fill="#666666"/>
<rect x="373" y="82" width="2" height="2" fill="#666666"/>
<rect x="385" y="82" width="2" height="2" fill="#666666"/>
<rect x="397" y="82" width="2" height="2" fill="#666666"/>
<rect x="409" y="82" width="2" height="2" fill="#666666"/>
<rect x="433" y="82" width="2" height="2" fill="#666666"/>
<rect x="445" y="82" width="2" height="2" fill="#666666"/>
<rect x="457" y="82" width="2" height="2" fill="#666666"/>
<rect x="469" y="82" width="2" height="2" fill="#666666"/>
<rect x="493" y="82" width="2" height="2" fill="#666666"/>
<rect x="505" y="82" width="2" height="2" fill="#666666"/>
<rect x="517" y="82" width="2" height="2" fill="#666666"/>
<rect x="529" y="82" width="2" height="2" fill="#666666"/>
<rect x="553" y="82" width="2" height="2" fill="#666666"/>
<rect x="565" y="82" width="2" height="2" fill="#666666"/>
<rect x="577" y="82" width="2" height="2" fill="#666666"/>
<rect x="589" y="82" width="2" height="2" fill="#666666"/>
<rect x="613" y="82" width="2" height="2" fill="#666666"/>
<rect x="625" y="82" width="2" height="2" fill="#666666"/>
<rect x="637" y="82" width="2" height="2" fill="#666666"/>
<rect x="649" y="82" width="2" height="2" fill="#666666"/>
<rect x="673" y="82" width="2" height="2" fill="#666666"/>
<rect x="685" y="82" width="2" height="2" fill="#666666"/>
<rect x="697" y="82" width="2" height="2" fill="#666666"/>
<rect x="709" y="82" width="2" height="2" fill="#666666"/>
<rect x="733" y="82" width="2" height="2" fill="#666666"/>
<rect x="745" y="82" width="2" height="2" fill="#666666"/>
<rect x="757" y="82" width="2" height="2" fill="#666666"/>
<rect x="769" y="82" width="2" height="2" fill="#666666"/>
<rect x="793" y="82" width="2" height="2" fill="#666666"/>
<rect x="805" y="82" width="2" height="2" fill="#666666"/>
<rect x="817" y="82" width="2" height="2" fill="#666666"/>
<rect x="829" y="82" width="2" height="2" fill="#666666"/>
<rect x="853" y="82" width="2" height="2" fill="#666666"/>
<rect x="865" y="82" width="2" height="2" fill="#666666"/>
<rect x="877" y="82" width="2" height="2" fill="#666666"/>
<rect x="889" y="82" width="2" height="2" fill="#666666"/>
<rect x="913" y="82" width="2" height="2" fill="#666666"/>
<rect x="925" y="82" width="2" height="2" fill="#666666"/>
<rect x="37" y="142" width="2" height="2" fill="#666666"/>
<rect x="49" y="142" width="2" height="2" fill="#666666"/>
<rect x="73" y="142" width="2" height="2" fill="#666666"/>
<rect x="85" y="142" width="2" height="2" fill="#666666"/>
<rect x="97" y="142" width="2" height="2" fill="#666666"/>
<rect x="109" y="142" width="2" height="2" fill="#666666"/>
<rect x="133" y="142" width="2" height="2" fill="#666666"/>
<rect x="145" y="142" width="2" height="2" fill="#666666"/>
<rect x="157" y="142" width="2" height="2" fill="#666666"/>
<rect x="169" y="142" width="2" height="2" fill="#666666"/>
<rect x="193" y="142" width="2" height="2" fill="#666666"/>
<rect x="205" y="142" width="2" height="2" fill="#666666"/>
<rect x="217" y="142" width="2" height="2" fill="#666666"/>
<rect x="229" y="142" width="2" height="2" fill="#666666"/>
<rect x="253" y="142" width="2" height="2" fill="#666666"/>
<rect x="265" y="142" width="2" height="2" fill="#666666"/>
<rect x="277" y="142" width="2" height="2" fill="#666666"/>
<rect x="289" y="142" width="2" height="2" fill="#666666"/>
<rect x="313" y="142" width="2" height="2" fill="#666666"/>
<rect x="325" y="142" width="2" height="2" fill="#666666"/>
<rect x="337" y="142" width="2" height="2" fill="#666666"/>
<rect x="349" y="142" width="2" height="2" fill="#666666"/>
<rect x="373" y="142" width="2" height="2" fill="#666666"/>
<rect x="385" y="142" width="2" height="2" fill="#666666"/>
<rect x="397" y="142" width="2" height="2" fill="#666666"/>
<rect x="409" y="142" width="2" height="2" fill="#666666"/>
<rect x="433" y="142" width="2" height="2" fill="#666666"/>
<rect x="445" y="142" width="2" height="2" fill="#666666"/>
<rect x="457" y="142" width="2" height="2" fill="#666666"/>
<rect x="469" y="142" width="2" height="2" fill="#666666"/>
<rect x="493" y="142" width="2" height="2" fill="#666666"/>
<rect x="505" y="142" width="2" height="2" fill="#666666"/>
<rect x="517" y="142" width="2" height="2" fill="#666666"/>
<rect x="529" y="142" width="2" height="2" fill="#666666"/>
<rect x="553" y="142" width="2" height="2" fill="#666666"/>
<rect x="565" y="142" width="2" height="2" fill="#666666"/>
<rect x="577" y="142" width="2" height="2" fill="#666666"/>
<rect x="589" y="142" width="2" height="2" fill="#666666"/>
<rect x="613" y="142" width="2" height="2" fill="#666666"/>
<rect x="625" y="142" width="2" height="2" fill="#666666"/>
<rect x="637" y="142" width="2" height="2" fill="#666666"/>
<rect x="649" y="142" width="2" height="2" fill="#666666"/>
<rect x="673" y="142" width="2" height="2" fill="#666666"/>
<rect x="685" y="142" width="2" height="2" fill="#666666"/>
<rect x="697" y="142" width="2" height="2" fill="#666666"/>
<rect x="709" y="142" width="2" height="2" fill="#666666"/>
<rect x="733" y="142" width="2" height="2" fill="#666666"/>
<rect x="745" y="142" width="2" height="2" fill="#666666"/>
<rect x="757" y="142" width="2" height="2" fill="#666666"/>
<rect x="769" y="142" width="2" height="2" fill="#666666"/>
<rect x="793" y="142" width="2" height="2" fill="#666666"/>
<rect x="805" y="142" width="2" height="2" fill="#666666"/>
<rect x="817" y="142" width="2" height="2" fill="#666666"/>
<rect x="829" y="142" width="2" height="2" fill="#666666"/>
<rect x="853" y="142" width="2" height="2" fill="#666666"/>
<rect x="865" y="142" width="2" height="2" fill="#666666"/>
<rect x="877" y="142" width="2" height="2" fill="#666666"/>
<rect x="889" y="142" width="2" height="2" fill="#666666"/>
<rect x="913" y="142" width="2" height="2" fill="#666666"/>
<rect x="925" y="142" width="2" height="2" fill="#666666"/>
<rect x="37" y="202" width="2" height="2" fill="#666666"/>
<rect x="49" y="202" width="2" height="2" fill="#666666"/>
<rect x="73" y="202" width="2" height="2" fill="#666666"/>
<rect x="85" y="202" width="2" height="2" fill="#666666"/>
<rect x="97" y="202" width="2" height="2" fill="#666666"/>
<rect x="109" y="202" width="2" height="2" fill="#666666"/>
<rect x="133" y="202" width="2" height="2" fill="#666666"/>
<rect x="145" y="202" width="2" height="2" fill="#666666"/>
<rect x="157" y="202" width="2" height="2" fill="#666666"/>
<rect x="169" y="202" width="2" height="2" fill="#666666"/>
<rect x="193" y="202" width="2" height="2" fill="#666666"/>
<rect x="205" y="202" width="2" height="2" fill="#666666"/>
<rect x="217" y="202" width="2" height="2" fill="#666666"/>
<rect x="229" y="202" width="2" height="2" fill="#666666"/>
<rect x="253" y="202" width="2" height="2" fill="#666666"/>
<rect x="265" y="202" width="2" height="2" fill="#666666"/>
<rect x="277" y="202" width="2" height="2" fill="#666666"/>
<rect x="289" y="202" width="2" height="2" fill="#666666"/>
<rect x="313" y="202" width="2" height="2" fill="#666666"/>
<rect x="325" y="202" width="2" height="2" fill="#666666"/>
<rect x="337" y="202" width="2" height="2" fill="#666666"/>
<rect x="349" y="202" width="2" height="2" fill="#666666"/>
<rect x="373" y="202" width="2" height="2" fill="#666666"/>
<rect x="385" y="202" width="2" height="2" fill="#666666"/>
<rect x="397" y="202" width="2" height="2" fill="#666666"/>
<rect x="409" y="202" width="2" height="2" fill="#666666"/>
<rect x="433" y="202" width="2" height="2" fill="#666666"/>
<rect x="445" y="202" width="2" height="2" fill="#666666"/>
<rect x="457" y="202" width="2" height="2" fill="#666666"/>
<rect x="469" y="202" width="2" height="2" fill="#666666"/>
<rect x="493" y="202" width="2" height="2" fill="#666666"/>
<rect x="505" y="202" width="2" height="2" fill="#666666"/>
<rect x="517" y="202" width="2" height="2" fill="#666666"/>
<rect x="529" y="202" width="2" height="2" fill="#666666"/>
<rect x="553" y="202" width="2" height="2" fill="#666666"/>
<rect x="565" y="202" width="2" height="2" fill="#666666"/>
<rect x="577" y="202" width="2" height="2" fill="#666666"/>
<rect x="589" y="202" width="2" height="2" fill="#666666"/>
<rect x="613" y="202" width="2" height="2" fill="#666666"/>
<rect x="625" y="202" width="2" height="2" fill="#666666"/>
<rect x="637" y="202" width="2" height="2" fill="#666666"/>
<rect x="649" y="202" width="2" height="2" fill="#666666"/>
<rect x="673" y="202" width="2" height="2" fill="#666666"/>
<rect x="685" y="202" width="2" height="2" fill="#666666"/>
<rect x="697" y="202" width="2" height="2" fill="#666666"/>
<rect x="709" y="202" width="2" height="2" fill="#666666"/>
<rect x="733" y="202" width="2" height="2" fill="#666666"/>
<rect x="745" y="202" width="2" height="2" fill="#666666"/>
<rect x="757" y="202" width="2" height="2" fill="#666666"/>
<rect x="769" y="202" width="2" height="2" fill="#666666"/>
<rect x="793" y="202" width="2" height="2" fill="#666666"/>
<rect x="805" y="202" width="2" height="2" fill="#666666"/>
<rect x="817" y="202" width="2" height="2" fill="#666666"/>
<rect x="829" y="202" width="2" height="2" fill="#666666"/>
<rect x="853" y="202" width="2" height="2" fill="#666666"/>
<rect x="865" y="202" width="2" height="2" fill="#666666"/>
<rect x="877" y="202" width="2" height="2" fill="#666666"/>
<rect x="889" y="202" width="2" height="2" fill="#666666"/>
<rect x="913" y="202" width="2" height="2" fill="#666666"/>
<rect x="925" y="202" width="2" height="2" fill="#666666"/>
<rect x="37" y="262" width="2" height="2" fill="#666666"/>
<rect x="49" y="262" width="2" height="2" fill="#666666"/>
<rect x="73" y="262" width="2" height="2" fill="#666666"/>
<rect x="85" y="262" width="2" height="2" fill="#666666"/>
<rect x="97" y="262" width="2" height="2" fill="#666666"/>
<rect x="109" y="262" width="2" height="2" fill="#666666"/>
<rect x="133" y="262" width="2" height="2" fill="#666666"/>
<rect x="145" y="262" width="2" height="2" fill="#666666"/>
<rect x="157" y="262" width="2" height="2" fill="#666666"/>
<rect x="169" y="262" width="2" height="2" fill="#666666"/>
<rect x="193" y="262" width="2" height="2" fill="#666666"/>
<rect x="205" y="262" width="2" height="2" fill="#666666"/>
<rect x="217" y="262" width="2" height="2" fill="#666666"/>
<rect x="229" y="262" width="2" height="2" fill="#666666"/>
<rect x="253" y="262" width="2" height="2" fill="#666666"/>
<rect x="265" y="262" width="2" height="2" fill="#666666"/>
<rect x="277" y="262" width="2" height="2" fill="#666666"/>
<rect x="289" y="262" width="2" height="2" fill="#666666"/>
<rect x="313" y="262" width="2" height="2" fill="#666666"/>
<rect x="325" y="262" width="2" height="2" fill="#666666"/>
<rect x="337" y="262" width="2" height="2" fill="#666666"/>
<rect x="349" y="262" width="2" height="2" fill="#666666"/>
<rect x="373" y="262" width="2" height="2" fill="#666666"/>
<rect x="385" y="262" width="2" height="2" fill="#666666"/>
<rect x="397" y="262" width="2" height="2" fill="#666666"/>
<rect x="409" y="262" width="2" height="2" fill="#666666"/>
<rect x="433" y="262" width="2" height="2" fill="#666666"/>
<rect x="445" y="262" width="2" height="2" fill="#666666"/>
<rect x="457" y="262" width="2" height="2" fill="#666666"/>
<rect x="469" y="262" width="2" height="2" fill="#666666"/>
<rect x="493" y="262" width="2" height="2" fill="#666666"/>
<rect x="505" y="262" width="2" height="2" fill="#666666"/>
<rect x="517" y="262" width="2" height="2" fill="#666666"/>
<rect x="529" y="262" width="2" height="2" fill="#666666"/>
<rect x="553" y="262" width="2" height="2" fill="#666666"/>
<rect x="565" y="262" width="2" height="2" fill="#666666"/>
<rect x="577" y="262" width="2" height="2" fill="#666666"/>
<rect x="589" y="262" width="2" height="2" fill="#666666"/>
<rect x="613" y="262" width="2" height="2" fill="#666666"/>
<rect x="625" y="262" width="2" height="2" fill="#666666"/>
<rect x="637" y="262" width="2" height="2" fill="#666666"/>
<rect x="649" y="262" width="2" height="2" fill="#666666"/>
<rect x="673" y="262" width="2" height="2" fill="#666666"/>
<rect x="685" y="262" width="2" height="2" fill="#666666"/>
<rect x="697" y="262" width="2" height="2" fill="#666666"/>
<rect x="709" y="262" width="2" height="2" fill="#666666"/>
<rect x="733" y="262" width="2" height="2" fill="#666666"/>
<rect x="745" y="262" width="2" height="2" fill="#666666"/>
<rect x="757" y="262" width="2" height="2" fill="#666666"/>
<rect x="769" y="262" width="2" height="2" fill="#666666"/>
<rect x="793" y="262" width="2" height="2" fill="#666666"/>
<rect x="805" y="262" width="2" height="2" fill="#666666"/>
<rect x="817" y="262" width="2" height="2" fill="#666666"/>
<rect x="829" y="262" width="2" height="2" fill="#666666"/>
<rect x="853" y="262" width="2" height="2" fill="#666666"/>
<rect x="865" y="262" width="2" height="2" fill="#666666"/>
<rect x="877" y="262" width="2" height="2" fill="#666666"/>
<rect x="889" y="262" width="2" height="2" fill="#666666"/>
<rect x="913" y="262" width="2" height="2" fill="#666666"/>
<rect x="925" y="262" width="2" height="2" fill="#666666"/>
<rect x="37" y="382" width="2" height="2" fill="#666666"/>
<rect x="49" y="382" width="2" height="2" fill="#666666"/>
<rect x="73" y="382" width="2" height="2" fill="#666666"/>
<rect x="85" y="382" width="2" height="2" fill="#666666"/>
<rect x="97" y="382" width="2" height="2" fill="#666666"/>
<rect x="109" y="382" width="2" height="2" fill="#666666"/>
<rect x="133" y="382" width="2" height="2" fill="#666666"/>
<rect x="145" y="382" width="2" height="2" fill="#666666"/>
<rect x="157" y="382" width="2" height="2" fill="#666666"/>
<rect x="169" y="382" width="2" height="2" fill="#666666"/>
<rect x="193" y="382" width="2" height="2" fill="#666666"/>
<rect x="205" y="382" width="2" height="2" fill="#666666"/>
<rect x="217" y="382" width="2" height="2" fill="#666666"/>
<rect x="229" y="382" width="2" height="2" fill="#666666"/>
<rect x="253" y="382" width="2" height="2" fill="#666666"/>
<rect x="265" y="382" width="2" height="2" fill="#666666"/>
<rect x="277" y="382" width="2" height="2" fill="#666666"/>
<rect x="289" y="382" width="2" height="2" fill="#666666"/>
<rect x="313" y="382" width="2" height="2" fill="#666666"/>
<rect x="325" y="382" width="2" height="2" fill="#666666"/>
<rect x="337" y="382" width="2" height="2" fill="#666666"/>
<rect x="349" y="382" width="2" height="2" fill="#666666"/>
<rect x="373" y="382" width="2" height="2" fill="#666666"/>
<rect x="385" y="382" width="2" height="2" fill="#666666"/>
<rect x="397" y="382" width="2" height="2" fill="#666666"/>
<rect x="409" y="382" width="2" height="2" fill="#666666"/>
<rect x="433" y="382" width="2" height="2" fill="#666666"/>
<rect x="445" y="382" width="2" height="2" fill="#666666"/>
<rect x="457" y="382" width="2" height="2" fill="#666666"/>
<rect x="469" y="382" width="2" height="2" fill="#666666"/>
<rect x="493" y="382" width="2" height="2" fill="#666666"/>
<rect x="505" y="382" width="2" height="2" fill="#666666"/>
<rect x="517" y="382" width="2" height="2" fill="#666666"/>
<rect x="529" y="382" width="2" height="2" fill="#666666"/>
<rect x="553" y="382" width="2" height="2" fill="#666666"/>
<rect x="565" y="382" width="2" height="2" fill="#666666"/>
<rect x="577" y="382" width="2" height="2" fill="#666666"/>
<rect x="589" y="382" width="2" height="2" fill="#666666"/>
<rect x="613" y="382" width="2" height="2" fill="#666666"/>
<rect x="625" y="382" width="2" height="2" fill="#666666"/>
<rect x="637" y="382" width="2" height="2" fill="#666666"/>
<rect x="649" y="382" width="2" height="2" fill="#666666"/>
<rect x="673" y="382" width="2" height="2" fill="#666666"/>
<rect x="685" y="382" width="2" height="2" fill="#666666"/>
<rect x="697" y="382" width="2" height="2" fill="#666666"/>
<rect x="709" y="382" width="2" height="2" fill="#666666"/>
<rect x="733" y="382" width="2" height="2" fill="#666666"/>
<rect x="745" y="382" width="2" height="2" fill="#666666"/>
<rect x="757" y="382" width="2" height="2" fill="#666666"/>
<rect x="769" y="382" width="2" height="2" fill="#666666"/>
<rect x="793" y="382" width="2" height="2" fill="#666666"/>
<rect x="805" y="382" width="2" height="2" fill="#666666"/>
<rect x="817" y="382" width="2" height="2" fill="#666666"/>
<rect x="829" y="382" width="2" height="2" fill="#666666"/>
<rect x="853" y="382" width="2" height="2" fill="#666666"/>
<rect x="865" y="382" width="2" height="2" fill="#666666"/>
<rect x="877" y="382" width="2" height="2" fill="#666666"/>
<rect x="889" y="382" width="2" height="2" fill="#666666"/>
<rect x="913" y="382" width="2" height="2" fill="#666666"/>
<rect x="925" y="382" width="2" height="2" fill="#666666"/>
<rect x="37" y="442" width="2" height="2" fill="#666666"/>
<rect x="49" y="442" width="2" height="2" fill="#666666"/>
<rect x="73" y="442" width="2" height="2" fill="#666666"/>
<rect x="85" y="442" width="2" height="2" fill="#666666"/>
<rect x="97" y="442" width="2" height="2" fill="#666666"/>
<rect x="109" y="442" width="2" height="2" fill="#666666"/>
<rect x="133" y="442" width="2" height="2" fill="#666666"/>
<rect x="145" y="442" width="2" height="2" fill="#666666"/>
<rect x="157" y="442" width="2" height="2" fill="#666666"/>
<rect x="169" y="442" width="2" height="2" fill="#666666"/>
<rect x="193" y="442" width="2" height="2" fill="#666666"/>
<rect x="205" y="442" width="2" height="2" fill="#666666"/>
<rect x="217" y="442" width="2" height="2" fill="#666666"/>
<rect x="229" y="442" width="2" height="2" fill="#666666"/>
<rect x="253" y="442" width="2" height="2" fill="#666666"/>
<rect x="265" y="442" width="2" height="2" fill="#666666"/>
<rect x="277" y="442" width="2" height="2" fill="#666666"/>
<rect x="289" y="442" width="2" height="2" fill="#666666"/>
<rect x="313" y="442" width="2" height="2" fill="#666666"/>
<rect x="325" y="442" width="2" height="2" fill="#666666"/>
<rect x="337" y="442" width="2" height="2" fill="#666666"/>
<rect x="349" y="442" width="2" height="2" fill="#666666"/>
<rect x="373" y="442" width="2" height="2" fill="#666666"/>
<rect x="385" y="442" width="2" height="2" fill="#666666"/>
<rect x="397" y="442" width="2" height="2" fill="#666666"/>
<rect x="409" y="442" width="2" height="2" fill="#666666"/>
<rect x="433" y="442" width="2" height="2" fill="#666666"/>
<rect x="445" y="442" width="2" height="2" fill="#666666"/>
<rect x="457" y="442" width="2" height="2" fill="#666666"/>
<rect x="469" y="442" width="2" height="2" fill="#666666"/>
<rect x="493" y="442" width="2" height="2" fill="#666666"/>
<rect x="505" y="442" width="2" height="2" fill="#666666"/>
<rect x="517" y="442" width="2" height="2" fill="#666666"/>
<rect x="529" y="442" width="2" height="2" fill="#666666"/>
<rect x="553" y="442" width="2" height="2" fill="#666666"/>
<rect x="565" y="442" width="2" height="2" fill="#666666"/>
<rect x="577" y="442" width="2" height="2" fill="#666666"/>
<rect x="589" y="442" width="2" height="2" fill="#666666"/>
<rect x="613" y="442" width="2" height="2" fill="#666666"/>
<rect x="625" y="442" width="2" height="2" fill="#666666"/>
<rect x="637" y="442" width="2" height="2" fill="#666666"/>
<rect x="649" y="442" width="2" height="2" fill="#666666"/>
<rect x="673" y="442" width="2" height="2" fill="#666666"/>
<rect x="685" y="442" width="2" height="2" fill="#666666"/>
<rect x="697" y="442" width="2" height="2" fill="#666666"/>
<rect x="709" y="442" width="2" height="2" fill="#666666"/>
<rect x="733" y="442" width="2" height="2" fill="#666666"/>
<rect x="745" y="442" width="2" height="2" fill="#666666"/>
<rect x="757" y="442" width="2" height="2" fill="#666666"/>
<rect x="769" y="442" width="2" height="2" fill="#666666"/>
<rect x="793" y="442" width="2" height="2" fill="#666666"/>
<rect x="805" y="442" width="2" height="2" fill="#666666"/>
<rect x="817" y="442" width="2" height="2" fill="#666666"/>
<rect x="829" y="442" width="2" height="2" fill="#666666"/>
<rect x="853" y="442" width="2" height="2" fill="#666666"/>
<rect x="865" y="442" width="2" height="2" fill="#666666"/>
<rect x="877" y="442" width="2" height="2" fill="#666666"/>
<rect x="889" y="442" width="2" height="2" fill="#666666"/>
<rect x="913" y="442" width="2" height="2" fill="#666666"/>
<rect x="925" y="442" width="2" height="2" fill="#666666"/>
<rect x="37" y="502" width="2" height="2" fill="#666666"/>
<rect x="49" y="502" width="2" height="2" fill="#666666"/>
<rect x="73" y="502" width="2" height="2" fill="#666666"/>
<rect x="85" y="502" width="2" height="2" fill="#666666"/>
<rect x="97" y="502" width="2" height="2" fill="#666666"/>
<rect x="109" y="502" width="2" height="2" fill="#666666"/>
<rect x="133" y="502" width="2" height="2" fill="#666666"/>
<rect x="145" y="502" width="2" height="2" fill="#666666"/>
<rect x="157" y="502" width="2" height="2" fill="#666666"/>
<rect x="169" y="502" width="2" height="2" fill="#666666"/>
<rect x="193" y="502" width="2" height="2" fill="#666666"/>
<rect x="205" y="502" width="2" height="2" fill="#666666"/>
<rect x="217" y="502" width="2" height="2" fill="#666666"/>
<rect x="229" y="502" width="2" height="2" fill="#666666"/>
<rect x="253" y="502" width="2" height="2" fill="#666666"/>
<rect x="265" y="502" width="2" height="2" fill="#666666"/>
<rect x="277" y="502" width="2" height="2" fill="#666666"/>
<rect x="289" y="502" width="2" height="2" fill="#666666"/>
<rect x="313" y="502" width="2" height="2" fill="#666666"/>
<rect x="325" y="502" width="2" height="2" fill="#666666"/>
<rect x="337" y="502" width="2" height="2" fill="#666666"/>
<rect x="349" y="502" width="2" height="2" fill="#666666"/>
<rect x="373" y="502" width="2" height="2" fill="#666666"/>
<rect x="385" y="502" width="2" height="2" fill="#666666"/>
<rect x="397" y="502" width="2" height="2" fill="#666666"/>
<rect x="409" y="502" width="2" height="2" fill="#666666"/>
<rect x="433" y="502" width="2" height="2" fill="#666666"/>
<rect x="445" y="502" width="2" height="2" fill="#666666"/>
<rect x="457" y="502" width="2" height="2" fill="#666666"/>
<rect x="469" y="502" width="2" height="2" fill="#666666"/>
<rect x="493" y="502" width="2" height="2" fill="#666666"/>
<rect x="505" y="502" width="2" height="2" fill="#666666"/>
<rect x="517" y="502" width="2" height="2" fill="#666666"/>
<rect x="529" y="502" width="2" height="2" fill="#666666"/>
<rect x="553" y="502" width="2" height="2" fill="#666666"/>
<rect x="565" y="502" width="2" height="2" fill="#666666"/>
<rect x="577" y="502" width="2" height="2" fill="#666666"/>
<rect x="589" y="502" width="2" height="2" fill="#666666"/>
<rect x="613" y="502" width="2" height="2" fill="#666666"/>
<rect x="625" y="502" width="2" height="2" fill="#666666"/>
<rect x="637" y="502" width="2" height="2" fill="#666666"/>
<rect x="649" y="502" width="2" height="2" fill="#666666"/>
<rect x="673" y="502" width="2" height="2" fill="#666666"/>
<rect x="685" y="502" width="2" height="2" fill="#666666"/>
<rect x="697" y="502" width="2" height="2" fill="#666666"/>
<rect x="709" y="502" width="2" height="2" fill="#666666"/>
<rect x="733" y="502" width="2" height="2" fill="#666666"/>
<rect x="745" y="502" width="2" height="2" fill="#666666"/>
<rect x="757" y="502" width="2" height="2" fill="#666666"/>
<rect x="769" y="502" width="2" height="2" fill="#666666"/>
<rect x="793" y="502" width="2" height="2" fill="#666666"/>
<rect x="805" y="502" width="2" height="2" fill="#666666"/>
<rect x="817" y="502" width="2" height="2" fill="#666666"/>
<rect x="829" y="502" width="2" height="2" fill="#666666"/>
<rect x="853" y="502" width="2" height="2" fill="#666666"/>
<rect x="865" y="502" width="2" height="2" fill="#666666"/>
<rect x="877" y="502" width="2" height="2" fill="#666666"/>
<rect x="889" y="502" width="2" height="2" fill="#666666"/>
<rect x="913" y="502" width="2" height="2" fill="#666666"/>
<rect x="925" y="502" width="2" height="2" fill="#666666"/>
<rect x="37" y="562" width="2" height="2" fill="#666666"/>
<rect x="49" y="562" width="2" height="2" fill="#666666"/>
<rect x="73" y="562" width="2" height="2" fill="#666666"/>
<rect x="85" y="562" width="2" height="2" fill="#666666"/>
<rect x="97" y="562" width="2" height="2" fill="#666666"/>
<rect x="109" y="562" width="2" height="2" fill="#666666"/>
<rect x="133" y="562" width="2" height="2" fill="#666666"/>
<rect x="145" y="562" width="2" height="2" fill="#666666"/>
<rect x="157" y="562" width="2" height="2" fill="#666666"/>
<rect x="169" y="562" width="2" height="2" fill="#666666"/>
<rect x="193" y="562" width="2" height="2" fill="#666666"/>
<rect x="205" y="562" width="2" height="2" fill="#666666"/>
<rect x="217" y="562" width="2" height="2" fill="#666666"/>
<rect x="229" y="562" width="2" height="2" fill="#666666"/>
<rect x="253" y="562" width="2" height="2" fill="#666666"/>
<rect x="265" y="562" width="2" height="2" fill="#666666"/>
<rect x="277" y="562" width="2" height="2" fill="#666666"/>
<rect x="289" y="562" width="2" height="2" fill="#666666"/>
<rect x="313" y="562" width="2" height="2" fill="#666666"/>
<rect x="325" y="562" width="2" height="2" fill="#666666"/>
<rect x="337" y="562" width="2" height="2" fill="#666666"/>
<rect x="349" y="562" width="2" height="2" fill="#666666"/>
<rect x="373" y="562" width="2" height="2" fill="#666666"/>
<rect x="385" y="562" width="2" height="2" fill="#666666"/>
<rect x="397" y="562" width="2" height="2" fill="#666666"/>
<rect x="409" y="562" width="2" height="2" fill="#666666"/>
<rect x="433" y="562" width="2" height="2" fill="#666666"/>
<rect x="445" y="562" width="2" height="2" fill="#666666"/>
<rect x="457" y="562" width="2" height="2" fill="#666666"/>
<rect x="469" y="562" width="2" height="2" fill="#666666"/>
<rect x="493" y="562" width="2" height="2" fill="#666666"/>
<rect x="505" y="562" width="2" height="2" fill="#666666"/>
<rect x="517" y="562" width="2" height="2" fill="#666666"/>
<rect x="529" y="562" width="2" height="2" fill="#666666"/>
<rect x="553" y="562" width="2" height="2" fill="#666666"/>
<rect x="565" y="562" width="2" height="2" fill="#666666"/>
<rect x="577" y="562" width="2" height="2" fill="#666666"/>
<rect x="589" y="562" width="2" height="2" fill="#666666"/>
<rect x="613" y="562" width="2" height="2" fill="#666666"/>
<rect x="625" y="562" width="2" height="2" fill="#666666"/>
<rect x="637" y="562" width="2" height="2" fill="#666666"/>
<rect x="649" y="562" width="2" height="2" fill="#666666"/>
<rect x="673" y="562" width="2" height="2" fill="#666666"/>
<rect x="685" y="562" width="2" height="2" fill="#666666"/>
<rect x="697" y="562" width="2" height="2" fill="#666666"/>
<rect x="709" y="562" width="2" height="2" fill="#666666"/>
<rect x="733" y="562" width="2" height="2" fill="#666666"/>
<rect x="745" y="562" width="2" height="2" fill="#666666"/>
<rect x="757" y="562" width="2" height="2" fill="#666666"/>
<rect x="769" y="562" width="2" height="2" fill="#666666"/>
<rect x="793" y="562" width="2" height="2" fill="#666666"/>
<rect x="805" y="562" width="2" height="2" fill="#666666"/>
<rect x="817" y="562" width="2" height="2" fill="#666666"/>
<rect x="829" y="562" width="2" height="2" fill="#666666"/>
<rect x="853" y="562" width="2" height="2" fill="#666666"/>
<rect x="865" y="562" width="2" height="2" fill="#666666"/>
<rect x="877" y="562" width="2" height="2" fill="#666666"/>
<rect x="889" y="562" width="2" height="2" fill="#666666"/>
<rect x="913" y="562" width="2" height="2" fill="#666666"/>
<rect x="925" y="562" width="2" height="2" fill="#666666"/>
<rect x="480" y="34" width="4" height="2" fill="#d0d0d0"/>
<rect x="480" y="46" width="4" height="2" fill="#d0d0d0"/>
<rect x="480" y="58" width="4" height="2" fill="#d0d0d0"/>
<rect x="480" y="70" width="4" height="2" fill="#d0d0d0"/>
<rect x="480" y="82" width="4" height="2" fill="#d0d0d0"/>
<rect x="480" y="94" width="4" height="2" fill="#d0d0d0"/>
<rect x="480" y="106" width="4" height="2" fill="#d0d0d0"/>
<rect x="480" y="118" width="4" height="2" fill="#d0d0d0"/>
<rect x="480" y="130" width="4" height="2" fill="#d0d0d0"/>
<rect x="480" y="142" width="4" height="2" fill="#d0d0d0"/>
<rect x="480" y="154" width="4" height="2" fill="#d0d0d0"/>
<rect x="480" y="166" width="4" height="2" fill="#d0d0d0"/>
<rect x="480" y="178" width="4" height="2" fill="#d0d0d0"/>
<rect x="480" y="190" width="4" height="2" fill="#d0d0d0"/>
<rect x="480" y="202" width="4" height="2" fill="#d0d0d0"/>
<rect x="480" y="214" width="4" height="2" fill="#d0d0d0"/>
<rect x="480" y="226" width="4" height="2" fill="#d0d0d0"/>
<rect x="480" y="238" width="4" height="2" fill="#d0d0d0"/>
<rect x="480" y="250" width="4" height="2" fill="#d0d0d0"/>
<rect x="480" y="262" width="4" height="2" fill="#d0d0d0"/>
<rect x="480" y="274" width="4" height="2" fill="#d0d0d0"/>
<rect x="480" y="286" width="4" height="2" fill="#d0d0d0"/>
<rect x="480" y="298" width="4" height="2" fill="#d0d0d0"/>
<rect x="480" y="310" width="4" height="2" fill="#d0d0d0"/>
<rect x="480" y="334" width="4" height="2" fill="#d0d0d0"/>
<rect x="480" y="346" width="4" height="2" fill="#d0d0d0"/>
<rect x="480" y="358" width="4" height="2" fill="#d0d0d0"/>
<rect x="480" y="370" width="4" height="2" fill="#d0d0d0"/>
<rect x="480" y="382" width="4" height="2" fill="#d0d0d0"/>
<rect x="480" y="394" width="4" height="2" fill="#d0d0d0"/>
<rect x="480" y="406" width="4" height="2" fill="#d0d0d0"/>
<rect x="480" y="418" width="4" height="2" fill="#d0d0d0"/>
<rect x="480" y="430" width="4" height="2" fill="#d0d0d0"/>
<rect x="480" y="442" width="4" height="2" fill="#d0d0d0"/>
<rect x="480" y="454" width="4" height="2" fill="#d0d0d0"/>
<rect x="480" y="466" width="4" height="2" fill="#d0d0d0"/>
<rect x="480" y="478" width="4" height="2" fill="#d0d0d0"/>
<rect x="480" y="490" width="4" height="2" fill="#d0d0d0"/>
<rect x="480" y="502" width="4" height="2" fill="#d0d0d0"/>
<rect x="480" y="514" width="4" height="2" fill="#d0d0d0"/>
<rect x="480" y="526" width="4" height="2" fill="#d0d0d0"/>
<rect x="480" y="538" width="4" height="2" fill="#d0d0d0"/>
<rect x="480" y="550" width="4" height="2" fill="#d0d0d0"/>
<rect x="480" y="562" width="4" height="2" fill="#d0d0d0"/>
<rect x="480" y="574" width="4" height="2" fill="#d0d0d0"/>
<rect x="480" y="586" width="4" height="2" fill="#d0d0d0"/>
<rect x="480" y="598" width="4" height="2" fill="#d0d0d0"/>
<rect x="480" y="610" width="4" height="2" fill="#d0d0d0"/>
<rect x="24" y="23" width="912" height="2" fill="#fff"/>
<rect x="24" y="620" width="912" height="2" fill="#fff"/>
<rect x="24" y="23" width="2" height="599" fill="#fff"/>
<rect x="934" y="23" width="2" height="599" fill="#fff"/>
<rect x="37" y="25" width="2" height="3" fill="#fff"/>
<rect x="37" y="617" width="2" height="3" fill="#fff"/>
<rect x="49" y="25" width="2" height="3" fill="#fff"/>
<rect x="49" y="617" width="2" height="3" fill="#fff"/>
<rect x="61" y="25" width="2" height="6" fill="#fff"/>
<rect x="61" y="614" width="2" height="6" fill="#fff"/>
<rect x="73" y="25" width="2" height="3" fill="#fff"/>
<rect x="73" y="617" width="2" height="3" fill="#fff"/>
<rect x="85" y="25" width="2" height="3" fill="#fff"/>
<rect x="85" y="617" width="2" height="3" fill="#fff"/>
<rect x="97" y="25" width="2" height="3" fill="#fff"/>
<rect x="97" y="617" width="2" height="3" fill="#fff"/>
<rect x="109" y="25" width="2" height="3" fill="#fff"/>
<rect x="109" y="617" width="2" height="3" fill="#fff"/>
<rect x="121" y="25" width="2" height="6" fill="#fff"/>
<rect x="121" y="614" width="2" height="6" fill="#fff"/>
<rect x="133" y="25" width="2" height="3" fill="#fff"/>
<rect x="133" y="617" width="2" height="3" fill="#fff"/>
<rect x="145" y="25" width="2" height="3" fill="#fff"/>
<rect x="145" y="617" width="2" height="3" fill="#fff"/>
<rect x="157" y="25" width="2" height="3" fill="#fff"/>
<rect x="157" y="617" width="2" height="3" fill="#fff"/>
<rect x="169" y="25" width="2" height="3" fill="#fff"/>
<rect x="169" y="617" width="2" height="3" fill="#fff"/>
<rect x="181" y="25" width="2" height="6" fill="#fff"/>
<rect x="181" y="614" width="2" height="6" fill="#fff"/>
<rect x="193" y="25" width="2" height="3" fill="#fff"/>
<rect x="193" y="617" width="2" height="3" fill="#fff"/>
<rect x="205" y="25" width="2" height="3" fill="#fff"/>
<rect x="205" y="617" width="2" height="3" fill="#fff"/>
<rect x="217" y="25" width="2" height="3" fill="#fff"/>
<rect x="217" y="617" width="2" height="3" fill="#fff"/>
<rect x="229" y="25" width="2" height="3" fill="#fff"/>
<rect x="229" y="617" width="2" height="3" fill="#fff"/>
<rect x="241" y="25" width="2" height="6" fill="#fff"/>
<rect x="241" y="614" width="2" height="6" fill="#fff"/>
<rect x="253" y="25" width="2" height="3" fill="#fff"/>
<rect x="253" y="617" width="2" height="3" fill="#fff"/>
<rect x="265" y="25" width="2" height="3" fill="#fff"/>
<rect x="265" y="617" width="2" height="3" fill="#fff"/>
<rect x="277" y="25" width="2" height="3" fill="#fff"/>
<rect x="277" y="617" width="2" height="3" fill="#fff"/>
<rect x="289" y="25" width="2" height="3" fill="#fff"/>
<rect x="289" y="617" width="2" height="3" fill="#fff"/>
<rect x="301" y="25" width="2" height="6" fill="#fff"/>
<rect x="301" y="614" width="2" height="6" fill="#fff"/>
<rect x="313" y="25" width="2" height="3" fill="#fff"/>
<rect x="313" y="617" width="2" height="3" fill="#fff"/>
<rect x="325" y="25" width="2" height="3" fill="#fff"/>
<rect x="325" y="617" width="2" height="3" fill="#fff"/>
<rect x="337" y="25" width="2" height="3" fill="#fff"/>
<rect x="337" y="617" width="2" height="3" fill="#fff"/>
<rect x="349" y="25" width="2" height="3" fill="#fff"/>
<rect x="349" y="617" width="2" height="3" fill="#fff"/>
<rect x="361" y="25" width="2" height="6" fill="#fff"/>
<rect x="361" y="614" width="2" height="6" fill="#fff"/>
<rect x="373" y="25" width="2" height="3" fill="#fff"/>
<rect x="373" y="617" width="2" height="3" fill="#fff"/>
<rect x="385" y="25" width="2" height="3" fill="#fff"/>
<rect x="385" y="617" width="2" height="3" fill="#fff"/>
<rect x="397" y="25" width="2" height="3" fill="#fff"/>
<rect x="397" y="617" width="2" height="3" fill="#fff"/>
<rect x="409" y="25" width="2" height="3" fill="#fff"/>
<rect x="409" y="617" width="2" height="3" fill="#fff"/>
<rect x="421" y="25" width="2" height="6" fill="#fff"/>
<rect x="421" y="614" width="2" height="6" fill="#fff"/>
<rect x="433" y="25" width="2" height="3" fill="#fff"/>
<rect x="433" y="617" width="2" height="3" fill="#fff"/>
<rect x="445" y="25" width="2" height="3" fill="#fff"/>
<rect x="445" y="617" width="2" height="3" fill="#fff"/>
<rect x="457" y="25" width="2" height="3" fill="#fff"/>
<rect x="457" y="617" width="2" height="3" fill="#fff"/>
<rect x="469" y="25" width="2" height="3" fill="#fff"/>
<rect x="469" y="617" width="2" height="3" fill="#fff"/>
<rect x="481" y="25" width="2" height="6" fill="#fff"/>
<rect x="481" y="614" width="2" height="6" fill="#fff"/>
<rect x="493" y="25" width="2" height="3" fill="#fff"/>
<rect x="493" y="617" width="2" height="3" fill="#fff"/>
<rect x="505" y="25" width="2" height="3" fill="#fff"/>
<rect x="505" y="617" width="2" height="3" fill="#fff"/>
<rect x="517" y="25" width="2" height="3" fill="#fff"/>
<rect x="517" y="617" width="2" height="3" fill="#fff"/>
<rect x="529" y="25" width="2" height="3" fill="#fff"/>
<rect x="529" y="617" width="2" height="3" fill="#fff"/>
<rect x="541" y="25" width="2" height="6" fill="#fff"/>
<rect x="541" y="614" width="2" height="6" fill="#fff"/>
<rect x="553" y="25" width="2" height="3" fill="#fff"/>
<rect x="553" y="617" width="2" height="3" fill="#fff"/>
<rect x="565" y="25" width="2" height="3" fill="#fff"/>
<rect x="565" y="617" width="2" height="3" fill="#fff"/>
<rect x="577" y="25" width="2" height="3" fill="#fff"/>
<rect x="577" y="617" width="2" height="3" fill="#fff"/>
<rect x="589" y="25" width="2" height="3" fill="#fff"/>
<rect x="589" y="617" width="2" height="3" fill="#fff"/>
<rect x="601" y="25" width="2" height="6" fill="#fff"/>
<rect x="601" y="614" width="2" height="6" fill="#fff"/>
<rect x="613" y="25" width="2" height="3" fill="#fff"/>
<rect x="613" y="617" width="2" height="3" fill="#fff"/>
<rect x="625" y="25" width="2" height="3" fill="#fff"/>
<rect x="625" y="617" width="2" height="3" fill="#fff"/>
<rect x="637" y="25" width="2" height="3" fill="#fff"/>
<rect x="637" y="617" width="2" height="3" fill="#fff"/>
<rect x="649" y="25" width="2" height="3" fill="#fff"/>
<rect x="649" y="617" width="2" height="3" fill="#fff"/>
<rect x="661" y="25" width="2" height="6" fill="#fff"/>
<rect x="661" y="614" width="2" height="6" fill="#fff"/>
<rect x="673" y="25" width="2" height="3" fill="#fff"/>
<rect x="673" y="617" width="2" height="3" fill="#fff"/>
<rect x="685" y="25" width="2" height="3" fill="#fff"/>
<rect x="685" y="617" width="2" height="3" fill="#fff"/>
<rect x="697" y="25" width="2" height="3" fill="#fff"/>
<rect x="697" y="617" width="2" height="3" fill="#fff"/>
<rect x="709" y="25" width="2" height="3" fill="#fff"/>
<rect x="709" y="617" width="2" height="3" fill="#fff"/>
<rect x="721" y="25" width="2" height="6" fill="#fff"/>
<rect x="721" y="614" width="2" height="6" fill="#fff"/>
<rect x="733" y="25" width="2" height="3" fill="#fff"/>
<rect x="733" y="617" width="2" height="3" fill="#fff"/>
<rect x="745" y="25" width="2" height="3" fill="#fff"/>
<rect x="745" y="617" width="2" height="3" fill="#fff"/>
<rect x="757" y="25" width="2" height="3" fill="#fff"/>
<rect x="757" y="617" width="2" height="3" fill="#fff"/>
<rect x="769" y="25" width="2" height="3" fill="#fff"/>
<rect x="769" y="617" width="2" height="3" fill="#fff"/>
<rect x="781" y="25" width="2" height="6" fill="#fff"/>
<rect x="781" y="614" width="2" height="6" fill="#fff"/>
<rect x="793" y="25" width="2" height="3" fill="#fff"/>
<rect x="793" y="617" width="2" height="3" fill="#fff"/>
<rect x="805" y="25" width="2" height="3" fill="#fff"/>
<rect x="805" y="617" width="2" height="3" fill="#fff"/>
<rect x="817" y="25" width="2" height="3" fill="#fff"/>
<rect x="817" y="617" width="2" height="3" fill="#fff"/>
<rect x="829" y="25" width="2" height="3" fill="#fff"/>
<rect x="829" y="617" width="2" height="3" fill="#fff"/>
<rect x="841" y="25" width="2" height="6" fill="#fff"/>
<rect x="841" y="614" width="2" height="6" fill="#fff"/>
<rect x="853" y="25" width="2" height="3" fill="#fff"/>
<rect x="853" y="617" width="2" height="3" fill="#fff"/>
<rect x="865" y="25" width="2" height="3" fill="#fff"/>
<rect x="865" y="617" width="2" height="3" fill="#fff"/>
<rect x="877" y="25" width="2" height="3" fill="#fff"/>
<rect x="877" y="617" width="2" height="3" fill="#fff"/>
<rect x="889" y="25" width="2" height="3" fill="#fff"/>
<rect x="889" y="617" width="2" height="3" fill="#fff"/>
<rect x="901" y="25" width="2" height="6" fill="#fff"/>
<rect x="901" y="614" width="2" height="6" fill="#fff"/>
<rect x="913" y="25" width="2" height="3" fill="#fff"/>
<rect x="913" y="617" width="2" height="3" fill="#fff"/>
<rect x="925" y="25" width="2" height="3" fill="#fff"/>
<rect x="925" y="617" width="2" height="3" fill="#fff"/>
<rect x="26" y="34" width="4" height="2" fill="#fff"/>
<rect x="930" y="34" width="4" height="2" fill="#fff"/>
<rect x="26" y="46" width="4" height="2" fill="#fff"/>
<rect x="930" y="46" width="4" height="2" fill="#fff"/>
<rect x="26" y="58" width="4" height="2" fill="#fff"/>
<rect x="930" y="58" width="4" height="2" fill="#fff"/>
<rect x="26" y="70" width="4" height="2" fill="#fff"/>
<rect x="930" y="70" width="4" height="2" fill="#fff"/>
<rect x="26" y="82" width="7" height="2" fill="#fff"/>
<rect x="927" y="82" width="7" height="2" fill="#fff"/>
<rect x="26" y="94" width="4" height="2" fill="#fff"/>
<rect x="930" y="94" width="4" height="2" fill="#fff"/>
<rect x="26" y="106" width="4" height="2" fill="#fff"/>
<rect x="930" y="106" width="4" height="2" fill="#fff"/>
<rect x="26" y="118" width="4" height="2" fill="#fff"/>
<rect x="930" y="118" width="4" height="2" fill="#fff"/>
<rect x="26" y="130" width="4" height="2" fill="#fff"/>
<rect x="930" y="130" width="4" height="2" fill="#fff"/>
<rect x="26" y="142" width="7" height="2" fill="#fff"/>
<rect x="927" y="142" width="7" height="2" fill="#fff"/>
<rect x="26" y="154" width="4" height="2" fill="#fff"/>
<rect x="930" y="154" width="4" height="2" fill="#fff"/>
<rect x="26" y="166" width="4" height="2" fill="#fff"/>
<rect x="930" y="166" width="4" height="2" fill="#fff"/>
<rect x="26" y="178" width="4" height="2" fill="#fff"/>
<rect x="930" y="178" width="4" height="2" fill="#fff"/>
<rect x="26" y="190" width="4" height="2" fill="#fff"/>
<rect x="930" y="190" width="4" height="2" fill="#fff"/>
<rect x="26" y="202" width="7" height="2" fill="#fff"/>
<rect x="927" y="202" width="7" height="2" fill="#fff"/>
<rect x="26" y="214" width="4" height="2" fill="#fff"/>
<rect x="930" y="214" width="4" height="2" fill="#fff"/>
<rect x="26" y="226" width="4" height="2" fill="#fff"/>
<rect x="930" y="226" width="4" height="2" fill="#fff"/>
<rect x="26" y="238" width="4" height="2" fill="#fff"/>
<rect x="930" y="238" width="4" height="2" fill="#fff"/>
<rect x="26" y="250" width="4" height="2" fill="#fff"/>
<rect x="930" y="250" width="4" height="2" fill="#fff"/>
<rect x="26" y="262" width="7" height="2" fill="#fff"/>
<rect x="927" y="262" width="7" height="2" fill="#fff"/>
<rect x="26" y="274" width="4" height="2" fill="#fff"/>
<rect x="930" y="274" width="4" height="2" fill="#fff"/>
<rect x="26" y="286" width="4" height="2" fill="#fff"/>
<rect x="930" y="286" width="4" height="2" fill="#fff"/>
<rect x="26" y="298" width="4" height="2" fill="#fff"/>
<rect x="930" y="298" width="4" height="2" fill="#fff"/>
<rect x="26" y="310" width="4" height="2" fill="#fff"/>
<rect x="930" y="310" width="4" height="2" fill="#fff"/>
<rect x="26" y="322" width="7" height="2" fill="#fff"/>
<rect x="927" y="322" width="7" height="2" fill="#fff"/>
<rect x="26" y="334" width="4" height="2" fill="#fff"/>
<rect x="930" y="334" width="4" height="2" fill="#fff"/>
<rect x="26" y="346" width="4" height="2" fill="#fff"/>
<rect x="930" y="346" width="4" height="2" fill="#fff"/>
<rect x="26" y="358" width="4" height="2" fill="#fff"/>
<rect x="930" y="358" width="4" height="2" fill="#fff"/>
<rect x="26" y="370" width="4" height="2" fill="#fff"/>
<rect x="930" y="370" width="4" height="2" fill="#fff"/>
<rect x="26" y="382" width="7" height="2" fill="#fff"/>
<rect x="927" y="382" width="7" height="2" fill="#fff"/>
<rect x="26" y="394" width="4" height="2" fill="#fff"/>
<rect x="930" y="394" width="4" height="2" fill="#fff"/>
<rect x="26" y="406" width="4" height="2" fill="#fff"/>
<rect x="930" y="406" width="4" height="2" fill="#fff"/>
<rect x="26" y="418" width="4" height="2" fill="#fff"/>
<rect x="930" y="418" width="4" height="2" fill="#fff"/>
<rect x="26" y="430" width="4" height="2" fill="#fff"/>
<rect x="930" y="430" width="4" height="2" fill="#fff"/>
<rect x="26" y="442" width="7" height="2" fill="#fff"/>
<rect x="927" y="442" width="7" height="2" fill="#fff"/>
<rect x="26" y="454" width="4" height="2" fill="#fff"/>
<rect x="930" y="454" width="4" height="2" fill="#fff"/>
<rect x="26" y="466" width="4" height="2" fill="#fff"/>
<rect x="930" y="466" width="4" height="2" fill="#fff"/>
<rect x="26" y="478" width="4" height="2" fill="#fff"/>
<rect x="930" y="478" width="4" height="2" fill="#fff"/>
<rect x="26" y="490" width="4" height="2" fill="#fff"/>
<rect x="930" y="490" width="4" height="2" fill="#fff"/>
<rect x="26" y="502" width="7" height="2" fill="#fff"/>
<rect x="927" y="502" width="7" height="2" fill="#fff"/>
<rect x="26" y="514" width="4" height="2" fill="#fff"/>
<rect x="930" y="514" width="4" height="2" fill="#fff"/>
<rect x="26" y="526" width="4" height="2" fill="#fff"/>
<rect x="930" y="526" width="4" height="2" fill="#fff"/>
<rect x="26" y="538" width="4" height="2" fill="#fff"/>
<rect x="930" y="538" width="4" height="2" fill="#fff"/>
<rect x="26" y="550" width="4" height="2" fill="#fff"/>
<rect x="930" y="550" width="4" height="2" fill="#fff"/>
<rect x="26" y="562" width="7" height="2" fill="#fff"/>
<rect x="927" y="562" width="7" height="2" fill="#fff"/>
<rect x="26" y="574" width="4" height="2" fill="#fff"/>
<rect x="930" y="574" width="4" height="2" fill="#fff"/>
<rect x="26" y="586" width="4" height="2" fill="#fff"/>
<rect x="930" y="586" width="4" height="2" fill="#fff"/>
<rect x="26" y="598" width="4" height="2" fill="#fff"/>
<rect x="930" y="598" width="4" height="2" fill="#fff"/>
<rect x="26" y="610" width="4" height="2" fill="#fff"/>
<rect x="930" y="610" width="4" height="2" fill="#fff"/>
<rect x="26" y="323" width="908" height="2" fill="#f0f028"/>
<rect x="35" y="301" width="2" height="23" fill="#f0f028"/>
<rect x="95" y="301" width="2" height="23" fill="#f0f028"/>
<rect x="155" y="301" width="2" height="23" fill="#f0f028"/>
<rect x="215" y="301" width="2" height="23" fill="#f0f028"/>
<rect x="275" y="301" width="2" height="23" fill="#f0f028"/>
<rect x="335" y="301" width="2" height="23" fill="#f0f028"/>
<rect x="395" y="301" width="2" height="23" fill="#f0f028"/>
<rect x="455" y="301" width="2" height="23" fill="#f0f028"/>
<rect x="515" y="301" width="2" height="23" fill="#f0f028"/>
<rect x="575" y="301" width="2" height="23" fill="#f0f028"/>
<rect x="635" y="301" width="2" height="23" fill="#f0f028"/>
<rect x="695" y="301" width="2" height="23" fill="#f0f028"/>
<rect x="755" y="301" width="2" height="23" fill="#f0f028"/>
<rect x="815" y="301" width="2" height="23" fill="#f0f028"/>
<rect x="875" y="301" width="2" height="23" fill="#f0f028"/>
<rect x="932" y="301" width="2" height="23" fill="#f0f028"/>
<rect x="27" y="322" width="1" height="1" fill="#f0f028"/>
<rect x="31" y="320" width="1" height="3" fill="#f0f028"/>
<rect x="34" y="322" width="1" height="1" fill="#f0f028"/>
<rect x="37" y="320" width="1" height="3" fill="#f0f028"/>
<rect x="45" y="325" width="1" height="3" fill="#f0f028"/>
<rect x="50" y="325" width="1" height="1" fill="#f0f028"/>
<rect x="58" y="325" width="1" height="3" fill="#f0f028"/>
<rect x="61" y="325" width="1" height="1" fill="#f0f028"/>
<rect x="66" y="322" width="1" height="1" fill="#f0f028"/>
<rect x="71" y="325" width="1" height="3" fill="#f0f028"/>
<rect x="74" y="325" width="1" height="2" fill="#f0f028"/>
<rect x="78" y="325" width="1" height="2" fill="#f0f028"/>
<rect x="89" y="325" width="1" height="2" fill="#f0f028"/>
<rect x="95" y="325" width="1" height="1" fill="#f0f028"/>
<rect x="97" y="321" width="1" height="2" fill="#f0f028"/>
<rect x="104" y="325" width="1" height="3" fill="#f0f028"/>
<rect x="112" y="321" width="1" height="2" fill="#f0f028"/>
<rect x="122" y="325" width="1" height="1" fill="#f0f028"/>
<rect x="128" y="325" width="1" height="2" fill="#f0f028"/>
<rect x="131" y="325" width="1" height="2" fill="#f0f028"/>
<rect x="136" y="322" width="1" height="1" fill="#f0f028"/>
<rect x="142" y="321" width="1" height="2" fill="#f0f028"/>
<rect x="144" y="321" width="1" height="2" fill="#f0f028"/>
<rect x="152" y="321" width="1" height="2" fill="#f0f028"/>
<rect x="161" y="321" width="1" height="2" fill="#f0f028"/>
<rect x="167" y="325" width="1" height="3" fill="#f0f028"/>
<rect x="170" y="321" width="1" height="2" fill="#f0f028"/>
<rect x="175" y="325" width="1" height="2" fill="#f0f028"/>
<rect x="186" y="325" width="1" height="2" fill="#f0f028"/>
<rect x="196" y="321" width="1" height="2" fill="#f0f028"/>
<rect x="202" y="321" width="1" height="2" fill="#f0f028"/>
<rect x="206" y="322" width="1" height="1" fill="#f0f028"/>
<rect x="208" y="322" width="1" height="1" fill="#f0f028"/>
<rect x="211" y="321" width="1" height="2" fill="#f0f028"/>
<rect x="216" y="325" width="1" height="2" fill="#f0f028"/>
<rect x="221" y="321" width="1" height="2" fill="#f0f028"/>
<rect x="225" y="321" width="1" height="2" fill="#f0f028"/>
<rect x="227" y="325" width="1" height="2" fill="#f0f028"/>
<rect x="233" y="320" width="1" height="3" fill="#f0f028"/>
<rect x="236" y="325" width="1" height="1" fill="#f0f028"/>
<rect x="241" y="325" width="1" height="1" fill="#f0f028"/>
<rect x="252" y="321" width="1" height="2" fill="#f0f028"/>
<rect x="257" y="325" width="1" height="2" fill="#f0f028"/>
<rect x="269" y="320" width="1" height="3" fill="#f0f028"/>
<rect x="273" y="322" width="1" height="1" fill="#f0f028"/>
<rect x="276" y="320" width="1" height="3" fill="#f0f028"/>
<rect x="279" y="325" width="1" height="2" fill="#f0f028"/>
<rect x="282" y="321" width="1" height="2" fill="#f0f028"/>
<rect x="285" y="325" width="1" height="3" fill="#f0f028"/>
<rect x="287" y="325" width="1" height="1" fill="#f0f028"/>
<rect x="293" y="321" width="1" height="2" fill="#f0f028"/>
<rect x="304" y="325" width="1" height="2" fill="#f0f028"/>
<rect x="308" y="325" width="1" height="2" fill="#f0f028"/>
<rect x="313" y="325" width="1" height="2" fill="#f0f028"/>
<rect x="322" y="320" width="1" height="3" fill="#f0f028"/>
<rect x="327" y="322" width="1" height="1" fill="#f0f028"/>
<rect x="332" y="321" width="1" height="2" fill="#f0f028"/>
<rect x="335" y="320" width="1" height="3" fill="#f0f028"/>
<rect x="341" y="321" width="1" height="2" fill="#f0f028"/>
<rect x="352" y="325" width="1" height="2" fill="#f0f028"/>
<rect x="357" y="320" width="1" height="3" fill="#f0f028"/>
<rect x="362" y="325" width="1" height="2" fill="#f0f028"/>
<rect x="365" y="325" width="1" height="1" fill="#f0f028"/>
<rect x="370" y="325" width="1" height="3" fill="#f0f028"/>
<rect x="375" y="325" width="1" height="3" fill="#f0f028"/>
<rect x="377" y="322" width="1" height="1" fill="#f0f028"/>
<rect x="382" y="322" width="1" height="1" fill="#f0f028"/>
<rect x="386" y="325" width="1" height="3" fill="#f0f028"/>
<rect x="391" y="320" width="1" height="3" fill="#f0f028"/>
<rect x="407" y="325" width="1" height="2" fill="#f0f028"/>
<rect x="418" y="321" width="1" height="2" fill="#f0f028"/>
<rect x="420" y="321" width="1" height="2" fill="#f0f028"/>
<rect x="426" y="321" width="1" height="2" fill="#f0f028"/>
<rect x="432" y="321" width="1" height="2" fill="#f0f028"/>
<rect x="438" y="321" width="1" height="2" fill="#f0f028"/>
<rect x="444" y="320" width="1" height="3" fill="#f0f028"/>
<rect x="448" y="321" width="1" height="2" fill="#f0f028"/>
<rect x="450" y="320" width="1" height="3" fill="#f0f028"/>
<rect x="454" y="321" width="1" height="2" fill="#f0f028"/>
<rect x="459" y="325" width="1" height="1" fill="#f0f028"/>
<rect x="466" y="321" width="1" height="2" fill="#f0f028"/>
<rect x="482" y="325" width="1" height="3" fill="#f0f028"/>
<rect x="487" y="321" width="1" height="2" fill="#f0f028"/>
<rect x="492" y="322" width="1" height="1" fill="#f0f028"/>
<rect x="498" y="320" width="1" height="3" fill="#f0f028"/>
<rect x="501" y="325" width="1" height="2" fill="#f0f028"/>
<rect x="503" y="325" width="1" height="2" fill="#f0f028"/>
<rect x="508" y="325" width="1" height="2" fill="#f0f028"/>
<rect x="513" y="321" width="1" height="2" fill="#f0f028"/>
<rect x="519" y="325" width="1" height="2" fill="#f0f028"/>
<rect x="523" y="321" width="1" height="2" fill="#f0f028"/>
<rect x="527" y="325" width="1" height="3" fill="#f0f028"/>
<rect x="530" y="321" width="1" height="2" fill="#f0f028"/>
<rect x="532" y="325" width="1" height="2" fill="#f0f028"/>
<rect x="544" y="325" width="1" height="2" fill="#f0f028"/>
<rect x="553" y="321" width="1" height="2" fill="#f0f028"/>
<rect x="557" y="325" width="1" height="2" fill="#f0f028"/>
<rect x="561" y="321" width="1" height="2" fill="#f0f028"/>
<rect x="566" y="321" width="1" height="2" fill="#f0f028"/>
<rect x="572" y="325" width="1" height="2" fill="#f0f028"/>
<rect x="575" y="321" width="1" height="2" fill="#f0f028"/>
<rect x="580" y="321" width="1" height="2" fill="#f0f028"/>
<rect x="583" y="321" width="1" height="2" fill="#f0f028"/>
<rect x="585" y="325" width="1" height="2" fill="#f0f028"/>
<rect x="588" y="321" width="1" height="2" fill="#f0f028"/>
<rect x="590" y="325" width="1" height="2" fill="#f0f028"/>
<rect x="592" y="325" width="1" height="1" fill="#f0f028"/>
<rect x="600" y="325" width="1" height="3" fill="#f0f028"/>
<rect x="613" y="325" width="1" height="2" fill="#f0f028"/>
<rect x="627" y="325" width="1" height="3" fill="#f0f028"/>
<rect x="635" y="325" width="1" height="1" fill="#f0f028"/>
<rect x="641" y="325" width="1" height="2" fill="#f0f028"/>
<rect x="643" y="321" width="1" height="2" fill="#f0f028"/>
<rect x="645" y="325" width="1" height="1" fill="#f0f028"/>
<rect x="651" y="325" width="1" height="2" fill="#f0f028"/>
<rect x="655" y="325" width="1" height="1" fill="#f0f028"/>
<rect x="666" y="325" width="1" height="2" fill="#f0f028"/>
<rect x="672" y="325" width="1" height="2" fill="#f0f028"/>
<rect x="678" y="325" width="1" height="2" fill="#f0f028"/>
<rect x="680" y="325" width="1" height="1" fill="#f0f028"/>
<rect x="685" y="320" width="1" height="3" fill="#f0f028"/>
<rect x="688" y="325" width="1" height="2" fill="#f0f028"/>
<rect x="693" y="322" width="1" height="1" fill="#f0f028"/>
<rect x="697" y="325" width="1" height="2" fill="#f0f028"/>
<rect x="703" y="325" width="1" height="2" fill="#f0f028"/>
<rect x="707" y="325" width="1" height="3" fill="#f0f028"/>
<rect x="710" y="321" width="1" height="2" fill="#f0f028"/>
<rect x="712" y="320" width="1" height="3" fill="#f0f028"/>
<rect x="720" y="325" width="1" height="2" fill="#f0f028"/>
<rect x="722" y="320" width="1" height="3" fill="#f0f028"/>
<rect x="728" y="325" width="1" height="2" fill="#f0f028"/>
<rect x="730" y="321" width="1" height="2" fill="#f0f028"/>
<rect x="734" y="321" width="1" height="2" fill="#f0f028"/>
<rect x="740" y="321" width="1" height="2" fill="#f0f028"/>
<rect x="744" y="321" width="1" height="2" fill="#f0f028"/>
<rect x="746" y="321" width="1" height="2" fill="#f0f028"/>
<rect x="751" y="325" width="1" height="2" fill="#f0f028"/>
<rect x="754" y="320" width="1" height="3" fill="#f0f028"/>
<rect x="756" y="321" width="1" height="2" fill="#f0f028"/>
<rect x="758" y="321" width="1" height="2" fill="#f0f028"/>
<rect x="771" y="321" width="1" height="2" fill="#f0f028"/>
<rect x="781" y="325" width="1" height="3" fill="#f0f028"/>
<rect x="786" y="321" width="1" height="2" fill="#f0f028"/>
<rect x="790" y="321" width="1" height="2" fill="#f0f028"/>
<rect x="794" y="325" width="1" height="2" fill="#f0f028"/>
<rect x="797" y="321" width="1" height="2" fill="#f0f028"/>
<rect x="800" y="325" width="1" height="2" fill="#f0f028"/>
<rect x="804" y="320" width="1" height="3" fill="#f0f028"/>
<rect x="810" y="321" width="1" height="2" fill="#f0f028"/>
<rect x="812" y="325" width="1" height="2" fill="#f0f028"/>
<rect x="817" y="325" width="1" height="2" fill="#f0f028"/>
<rect x="821" y="322" width="1" height="1" fill="#f0f028"/>
<rect x="824" y="321" width="1" height="2" fill="#f0f028"/>
<rect x="827" y="325" width="1" height="1" fill="#f0f028"/>
<rect x="837" y="325" width="1" height="2" fill="#f0f028"/>
<rect x="840" y="321" width="1" height="2" fill="#f0f028"/>
<rect x="848" y="325" width="1" height="2" fill="#f0f028"/>
<rect x="850" y="321" width="1" height="2" fill="#f0f028"/>
<rect x="856" y="325" width="1" height="1" fill="#f0f028"/>
<rect x="859" y="325" width="1" height="2" fill="#f0f028"/>
<rect x="864" y="320" width="1" height="3" fill="#f0f028"/>
<rect x="874" y="325" width="1" height="1" fill="#f0f028"/>
<rect x="880" y="325" width="1" height="2" fill="#f0f028"/>
<rect x="882" y="321" width="1" height="2" fill="#f0f028"/>
<rect x="885" y="321" width="1" height="2" fill="#f0f028"/>
<rect x="888" y="325" width="1" height="2" fill="#f0f028"/>
<rect x="896" y="325" width="1" height="3" fill="#f0f028"/>
<rect x="899" y="320" width="1" height="3" fill="#f0f028"/>
<rect x="901" y="321" width="1" height="2" fill="#f0f028"/>
<rect x="913" y="321" width="1" height="2" fill="#f0f028"/>
<rect x="921" y="321" width="1" height="2" fill="#f0f028"/>
<rect x="931" y="321" width="1" height="2" fill="#f0f028"/>
</svg>
<div class="a" style="left:145px;top:1px;width:95px;height:21.5px;border-radius:10px 6px 6px 10px / 10.5px 7px 7px 10.5px;background:#f00000"></div>
<div class="a" style="left:300px;top:0px;width:361px;height:23px;border-radius:11.5px;background:#000"></div>

<div class="a" style="left:672px;top:0px;width:129px;height:23px;border-radius:11.5px;background:#000"></div>

<div class="a" style="left:820px;top:0px;width:71px;height:23px;border-radius:11.5px;background:#000"></div>

<svg width="960" height="30" style="top:0" shape-rendering="crispEdges">
<rect x="353" y="2" width="2" height="21" fill="#d0d0d0"/><rect x="353" y="2" width="4" height="2" fill="#d0d0d0"/>
<rect x="605" y="2" width="2" height="21" fill="#d0d0d0"/><rect x="603" y="2" width="4" height="2" fill="#d0d0d0"/>
<rect x="312" y="10" width="337" height="2" fill="#b8c040"/>
<rect x="436" y="2" width="7" height="2" fill="#d028d0"/><rect x="439" y="4" width="2" height="4" fill="#d028d0"/>
</svg>
<svg width="960" height="30" style="top:0">
<path d="M677.2 5 Q677.2 4.2 678 4.2 H690.8 Q691.6 4.2 691.6 5 V15.5 Q691.6 17 689.5 17.8 L684.5 19.2 L679.5 17.8 Q677.2 17 677.2 15.5 Z" fill="none" stroke="#8a2ed8" stroke-width="1.6"/>
<path d="M679.2 8.8 H688.8 M684.5 8.8 V16.6" stroke="#c040e8" stroke-width="1.9"/>
<path d="M907 7 Q908 3 912 3.5 Q916 4 915.5 7.5 Q914 10 911 11.5 Q908 11 907 7 Z" fill="#40b828"/>
<path d="M908 6 Q909 4 911 4.5 Q910 7 908.5 8 Z" fill="#70e060"/>
<path d="M910 11 L911 15.5" stroke="#a0d0e8" stroke-width="1.3"/>
<path d="M909.5 14.5 L918.5 10.2 L921 15.2 L912.2 18.6 Z" fill="#2858b8" stroke="#d0a0b8" stroke-width="1.1"/>
<path d="M913 14.5 L917 12.8 L918 15 L914 16.5 Z" fill="#804060"/>
</svg>
<div class="t" style="left:29px;top:4.71px;font-size:18px;line-height:18px;color:#001850;letter-spacing:1.6px;-webkit-text-stroke:0.15px #001850;">AKTAKOM</div>

<div class="t" style="left:168px;top:4.71px;font-size:18px;line-height:18px;color:#480000;letter-spacing:1.2px;-webkit-text-stroke:0.3px #480000;">Stop</div>

<div class="t" style="left:695px;top:4.71px;font-size:18px;line-height:18px;color:#ffffff;letter-spacing:1.33px;-webkit-text-stroke:0.4px #000;">48<span class="z" style="width:12.132px">0</span>.<span class="z" style="width:12.132px">0</span>ms</div>

<div class="t" style="left:831px;top:4.71px;font-size:18px;line-height:18px;color:#ffffff;letter-spacing:1.5px;-webkit-text-stroke:0.4px #000;">8:2<span class="z" style="width:12.302px">0</span></div>

<div class="a" style="left:0;top:623px;width:383px;height:97px;background:#70b8c8"></div>
<div class="a" style="left:2px;top:646px;width:248px;height:2px;background:#3a7890"></div>
<div class="a" style="left:383px;top:646px;width:575px;height:71px;background:#0562a4"></div>
<div class="a" style="left:383px;top:717px;width:577px;height:3px;background:#0878d0"></div>
<div class="a" style="left:2px;top:624px;width:248px;height:22px;border-radius:4px;background:#000"></div>

<div class="a" style="left:2px;top:648px;width:248px;height:22px;border-radius:4px;background:#000"></div>

<div class="a" style="left:254px;top:624px;width:126px;height:46px;border-radius:5px;background:#000"></div>

<div class="a" style="left:2px;top:673px;width:378px;height:43.5px;border-radius:5px;background:#000"></div>

<div class="a" style="left:383px;top:624px;width:118px;height:21px;border-radius:10.5px;background:#000"></div>

<div class="a" style="left:798px;top:624px;width:154px;height:21px;border-radius:10.5px;background:#000"></div>

<svg width="960" height="720" style="top:0">
<circle cx="12.5" cy="636" r="9.5" fill="#f00000"/>
<circle cx="12.5" cy="660" r="9.8" fill="#e8e020"/>
<circle cx="11.5" cy="684" r="9.5" fill="#e8e020"/>
<circle cx="11.5" cy="707" r="9.5" fill="#e8e020"/>
<circle cx="202.5" cy="684.5" r="9.5" fill="#e8e020"/>
<circle cx="202.5" cy="707.5" r="9.5" fill="#e8e020"/>
<circle cx="810.5" cy="634.5" r="9.5" fill="#f00000"/>
<path d="M823 642.5 H832 L837 627.5 H845" fill="none" stroke="#f0f0f0" stroke-width="1.6"/>
<path d="M9.5 634.5 L13.2 631.5 V642.8" fill="none" stroke="#300000" stroke-width="2.2"/>
<path d="M807.8 631 L811.2 628.3 V639.5" fill="none" stroke="#300000" stroke-width="2.2"/>
<path d="M0.7 313.7 H17 L23.5 324 L17 333.8 H0.7 Z" fill="#000" stroke="#d8e828" stroke-width="1.4"/>
</svg>

<div class="t" style="left:2.30px;width:20px;text-align:center;top:652.44px;font-size:16.5px;line-height:16.5px;color:#000;font-family:'Liberation Sans',sans-serif;-webkit-text-stroke:0.3px #000">2</div>

<div class="t" style="left:1.50px;width:20px;text-align:center;top:676.44px;font-size:16.5px;line-height:16.5px;color:#000;font-family:'Liberation Sans',sans-serif;-webkit-text-stroke:0.3px #000">2</div>

<div class="t" style="left:1.50px;width:20px;text-align:center;top:699.44px;font-size:16.5px;line-height:16.5px;color:#000;font-family:'Liberation Sans',sans-serif;-webkit-text-stroke:0.3px #000">2</div>

<div class="t" style="left:192.50px;width:20px;text-align:center;top:676.94px;font-size:16.5px;line-height:16.5px;color:#000;font-family:'Liberation Sans',sans-serif;-webkit-text-stroke:0.3px #000">2</div>

<div class="t" style="left:192.50px;width:20px;text-align:center;top:699.94px;font-size:16.5px;line-height:16.5px;color:#000;font-family:'Liberation Sans',sans-serif;-webkit-text-stroke:0.3px #000">2</div>


<div class="t" style="left:4px;top:316.59px;font-size:17.5px;line-height:17.5px;color:#e0e020;letter-spacing:0px;">2</div>

<div class="t" style="left:21.5px;top:629.21px;font-size:18px;line-height:18px;color:#e01828;letter-spacing:1.2px;-webkit-text-stroke:0.4px #000;">5V-</div>

<div class="t" style="left:126.5px;top:629.21px;font-size:18px;line-height:18px;color:#f01820;letter-spacing:1.2px;-webkit-text-stroke:0.4px #000;"><span class="z" style="width:12.002px">0</span>.<span class="z" style="width:12.002px">0</span><span class="z" style="width:12.002px">0</span>div</div>

<div class="t" style="left:21.5px;top:653.21px;font-size:18px;line-height:18px;color:#e8e038;letter-spacing:1.2px;-webkit-text-stroke:0.4px #000;">1V-</div>

<div class="t" style="left:126.5px;top:653.21px;font-size:18px;line-height:18px;color:#e8e038;letter-spacing:1.2px;-webkit-text-stroke:0.4px #000;"><span class="z" style="width:12.002px">0</span>.<span class="z" style="width:12.002px">0</span><span class="z" style="width:12.002px">0</span>div</div>

<div class="t" style="left:262.5px;top:628.71px;font-size:18px;line-height:18px;color:#f8f8f8;letter-spacing:1.36px;-webkit-text-stroke:0.4px #000;">(2.5KS/s)</div>

<div class="t" style="left:260.5px;top:650.71px;font-size:18px;line-height:18px;color:#f8f8f8;letter-spacing:1.45px;-webkit-text-stroke:0.4px #000;">Depth:1<span class="z" style="width:12.252px">0</span>K</div>

<div class="t" style="left:25px;top:676.21px;font-size:18px;line-height:18px;color:#ece440;letter-spacing:2.0px;-webkit-text-stroke:0.4px #000;">F:</div>

<div class="t" style="left:72.5px;top:676.21px;font-size:18px;line-height:18px;color:#ece440;letter-spacing:1.0px;-webkit-text-stroke:0.4px #000;">?</div>

<div class="t" style="left:25px;top:699.21px;font-size:18px;line-height:18px;color:#ece440;letter-spacing:2.0px;-webkit-text-stroke:0.4px #000;">+D:</div>

<div class="t" style="left:85.5px;top:699.21px;font-size:18px;line-height:18px;color:#ece440;letter-spacing:1.0px;-webkit-text-stroke:0.4px #000;">?</div>

<div class="t" style="left:216.5px;top:676.21px;font-size:18px;line-height:18px;color:#ece440;letter-spacing:1.48px;-webkit-text-stroke:0.4px #000;">Vk:33.4<span class="z" style="width:12.282px">0</span>mv</div>

<div class="t" style="left:216.5px;top:699.21px;font-size:18px;line-height:18px;color:#ece440;letter-spacing:1.47px;-webkit-text-stroke:0.4px #000;">V:1.947mv</div>

<div class="t" style="left:398.5px;top:627.21px;font-size:18px;line-height:18px;color:#ffffff;letter-spacing:1.6px;-webkit-text-stroke:0.4px #000;">M:2<span class="z" style="width:12.402px">0</span><span class="z" style="width:12.402px">0</span>ms</div>

<div class="t" style="left:847.5px;top:628.21px;font-size:18px;line-height:18px;color:#ffffff;letter-spacing:1.3px;-webkit-text-stroke:0.4px #000;"><span class="z" style="width:12.102px">0</span>.<span class="z" style="width:12.102px">0</span><span class="z" style="width:12.102px">0</span>mV</div>

<div class="a" style="left:387px;top:649px;width:106px;height:66px;background:#0080e0;border-radius:3px;box-shadow:inset 2px 2px 0 #60b0f0, inset -2px -2px 0 #004890"></div>
<div class="a" style="left:717px;top:649px;width:106px;height:66px;background:#0080e0;border-radius:3px;box-shadow:inset 2px 2px 0 #60b0f0, inset -2px -2px 0 #004890"></div>
<div class="a" style="left:409px;top:685px;width:60px;height:24px;background:#e8e8e8"></div>
<div class="t" style="left:414.5px;top:660.21px;font-size:18px;line-height:18px;color:#002050;letter-spacing:1.33px;-webkit-text-stroke:0.6px #002050;">Type</div>

<div class="t" style="left:409.5px;top:689.21px;font-size:18px;line-height:18px;color:#000;letter-spacing:0.8px;">Image</div>

<div class="t" style="left:744.5px;top:674.71px;font-size:18px;line-height:18px;color:#002050;letter-spacing:1.4px;-webkit-text-stroke:0.2px #002050;">Save</div>

</body></html>
